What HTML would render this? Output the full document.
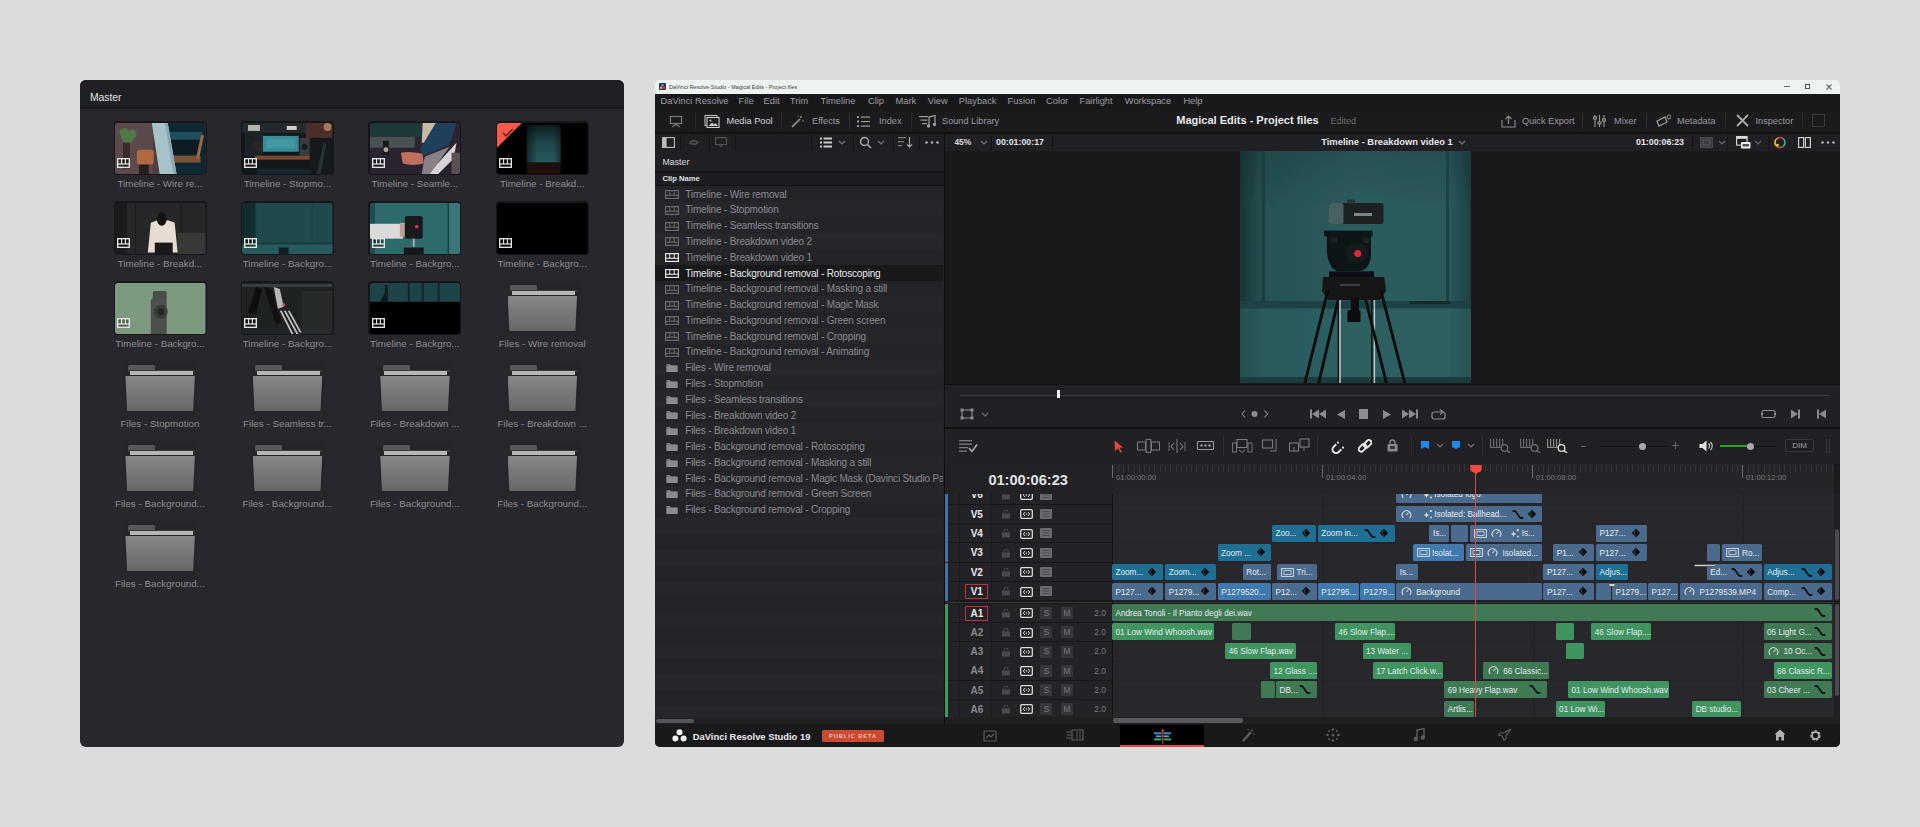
<!DOCTYPE html>
<html><head><meta charset="utf-8"><style>
*{box-sizing:border-box;margin:0;padding:0}
html,body{width:1920px;height:827px;overflow:hidden;background:#dcdcdc;font-family:"Liberation Sans",sans-serif;position:relative}
.a{position:absolute}
.t{white-space:nowrap;line-height:1.15}
</style></head><body>
<div class="a" style="left:80px;top:80px;width:544px;height:666.7px;background:#28272d;border-radius:6px;overflow:hidden">
<div class="a" style="left:0;top:0;width:544px;height:29px;background:#1f1f24;border-bottom:2px solid #18181c"></div>
<div class="a t" style="left:10px;top:12.3px;font-size:10.3px;color:#e6e6e6">Master</div>
</div>
<div class="a" style="left:113.5px;top:121.2px;width:93px;height:54px;border-radius:4px;background:#17171b"></div>
<svg class="a" style="left:115px;top:122.7px;border-radius:3px;filter:blur(0.5px)" width="90.5" height="51.5" viewBox="0 0 91 52" preserveAspectRatio="none"><rect width="91" height="52" fill="#4e3e40"/>
<rect x="0" y="0" width="38" height="52" fill="#5a4a4c"/>
<path d="M4 8 Q10 2 14 8 Q20 4 22 12 L16 20 L8 19Z" fill="#4f7a48"/>
<rect x="8" y="20" width="7" height="26" fill="#3a2c28"/>
<rect x="22" y="27" width="17" height="15" rx="3" fill="#b26a44"/>
<rect x="24" y="42" width="10" height="10" fill="#2a1e1a"/>
<rect x="52" y="0" width="39" height="52" fill="#0f2730"/>
<rect x="54" y="9" width="34" height="8" fill="#1f4e5e"/>
<rect x="53" y="17" width="32" height="14" fill="#0c1c22"/>
<rect x="58" y="33" width="28" height="7" fill="#7a5238"/>
<rect x="84" y="12" width="3" height="24" fill="#9a6a40" transform="rotate(12 85 24)"/>
<path d="M37 0 H53 L62 52 H45Z" fill="#a7c2c8"/>
<path d="M50 0 H53 L62 52 H59Z" fill="#8aa8b0"/></svg>
<svg class="a" style="left:117px;top:158.0px" width="13" height="10" viewBox="0 0 13 10"><rect x="0.7" y="0.7" width="11.6" height="8.6" fill="#000" fill-opacity="0.35" stroke="#eee" stroke-width="1.3"/><line x1="0.7" y1="6" x2="12.3" y2="6" stroke="#eee" stroke-width="1.2"/><line x1="4.6" y1="0.7" x2="4.6" y2="6" stroke="#eee" stroke-width="1.1"/><line x1="8.4" y1="0.7" x2="8.4" y2="6" stroke="#eee" stroke-width="1.1"/></svg>
<div class="a t" style="left:96px;width:128px;text-align:center;top:177.7px;font-size:9.8px;line-height:12px;color:#8d8d92">Timeline - Wire re...</div>
<div class="a" style="left:240.9px;top:121.2px;width:93px;height:54px;border-radius:4px;background:#17171b"></div>
<svg class="a" style="left:242.4px;top:122.7px;border-radius:3px;filter:blur(0.5px)" width="90.5" height="51.5" viewBox="0 0 91 52" preserveAspectRatio="none"><rect width="91" height="52" fill="#12171b"/>
<rect x="0" y="0" width="91" height="10" fill="#24292e"/>
<rect x="6" y="2" width="12" height="6" fill="#b8b4ae"/>
<rect x="45" y="3" width="10" height="4" fill="#d8d0c0"/>
<rect x="64" y="0" width="27" height="18" fill="#4a3028"/>
<circle cx="86" cy="4" r="4" fill="#a8785a"/>
<rect x="3" y="10" width="18" height="24" fill="#1b2228"/>
<circle cx="16" cy="23" r="5" fill="#2a2622"/>
<rect x="21" y="13" width="36" height="16" fill="#3a8c98"/>
<rect x="25" y="16" width="28" height="9" fill="#4aa0aa" opacity="0.6"/>
<rect x="58" y="15" width="11" height="18" fill="#3a3c40"/>
<circle cx="63" cy="24" r="3" fill="#16181a"/>
<rect x="13" y="33" width="58" height="4" fill="#7a4a30"/>
<rect x="68" y="15" width="23" height="37" fill="#15191c"/>
<path d="M75 52 L82 20 L85 21 L79 52Z" fill="#2a3034"/>
<rect x="15" y="46" width="55" height="6" fill="#13262e"/></svg>
<svg class="a" style="left:244.4px;top:158.0px" width="13" height="10" viewBox="0 0 13 10"><rect x="0.7" y="0.7" width="11.6" height="8.6" fill="#000" fill-opacity="0.35" stroke="#eee" stroke-width="1.3"/><line x1="0.7" y1="6" x2="12.3" y2="6" stroke="#eee" stroke-width="1.2"/><line x1="4.6" y1="0.7" x2="4.6" y2="6" stroke="#eee" stroke-width="1.1"/><line x1="8.4" y1="0.7" x2="8.4" y2="6" stroke="#eee" stroke-width="1.1"/></svg>
<div class="a t" style="left:223.4px;width:128px;text-align:center;top:177.7px;font-size:9.8px;line-height:12px;color:#8d8d92">Timeline - Stopmo...</div>
<div class="a" style="left:368.3px;top:121.2px;width:93px;height:54px;border-radius:4px;background:#17171b"></div>
<svg class="a" style="left:369.8px;top:122.7px;border-radius:3px;filter:blur(0.5px)" width="90.5" height="51.5" viewBox="0 0 91 52" preserveAspectRatio="none"><rect width="91" height="52" fill="#2a2430"/>
<rect x="0" y="0" width="55" height="14" fill="#1f383a"/>
<rect x="0" y="14" width="45" height="11" fill="#4b5153"/>
<rect x="13" y="18" width="6" height="14" fill="#1a1a1c"/>
<circle cx="16" cy="27" r="2.5" fill="#b0a8a0"/>
<path d="M31 30 Q40 28 53 31 L54 41 Q42 44 33 41Z" fill="#c06e5e"/>
<path d="M53 0 H68 L58 20 L52 20Z" fill="#c8b8a8"/>
<path d="M66 0 H87 L80 22 L55 33 L50 27Z" fill="#1f3f5a"/>
<path d="M58 52 L87 20 L84 36 L68 52Z" fill="#d8d4d8"/>
<path d="M55 34 L80 24 L60 52 L52 52Z" fill="#8a8088"/>
<rect x="82" y="30" width="9" height="22" fill="#5a5050"/></svg>
<svg class="a" style="left:371.8px;top:158.0px" width="13" height="10" viewBox="0 0 13 10"><rect x="0.7" y="0.7" width="11.6" height="8.6" fill="#000" fill-opacity="0.35" stroke="#eee" stroke-width="1.3"/><line x1="0.7" y1="6" x2="12.3" y2="6" stroke="#eee" stroke-width="1.2"/><line x1="4.6" y1="0.7" x2="4.6" y2="6" stroke="#eee" stroke-width="1.1"/><line x1="8.4" y1="0.7" x2="8.4" y2="6" stroke="#eee" stroke-width="1.1"/></svg>
<div class="a t" style="left:350.8px;width:128px;text-align:center;top:177.7px;font-size:9.8px;line-height:12px;color:#8d8d92">Timeline - Seamle...</div>
<div class="a" style="left:495.7px;top:121.2px;width:93px;height:54px;border-radius:4px;background:#17171b"></div>
<svg class="a" style="left:497.2px;top:122.7px;border-radius:3px;filter:blur(0.5px)" width="90.5" height="51.5" viewBox="0 0 91 52" preserveAspectRatio="none"><rect width="91" height="52" fill="#000"/>
<defs><linearGradient id="t4g" x1="0" x2="0" y1="0" y2="1"><stop offset="0" stop-color="#0c1d1f"/><stop offset="0.45" stop-color="#1d4649"/><stop offset="1" stop-color="#275a60"/></linearGradient><linearGradient id="t4h" x1="0" x2="1" y1="0" y2="0"><stop offset="0" stop-color="#000" stop-opacity="0.5"/><stop offset="0.3" stop-color="#000" stop-opacity="0"/><stop offset="0.8" stop-color="#000" stop-opacity="0"/><stop offset="1" stop-color="#000" stop-opacity="0.4"/></linearGradient></defs>
<rect x="30" y="2" width="34" height="38" fill="url(#t4g)"/>
<rect x="30" y="2" width="34" height="38" fill="url(#t4h)"/>
<rect x="30" y="40" width="34" height="11" fill="#1e0e0c"/>
<path d="M0 0 H25 L0 25Z" fill="#f65a48"/>
<path d="M6 10 L9 13 L16 6" fill="none" stroke="#6a1a14" stroke-width="1.5"/></svg>
<svg class="a" style="left:499.2px;top:158.0px" width="13" height="10" viewBox="0 0 13 10"><rect x="0.7" y="0.7" width="11.6" height="8.6" fill="#000" fill-opacity="0.35" stroke="#eee" stroke-width="1.3"/><line x1="0.7" y1="6" x2="12.3" y2="6" stroke="#eee" stroke-width="1.2"/><line x1="4.6" y1="0.7" x2="4.6" y2="6" stroke="#eee" stroke-width="1.1"/><line x1="8.4" y1="0.7" x2="8.4" y2="6" stroke="#eee" stroke-width="1.1"/></svg>
<div class="a t" style="left:478.2px;width:128px;text-align:center;top:177.7px;font-size:9.8px;line-height:12px;color:#8d8d92">Timeline - Breakd...</div>
<div class="a" style="left:113.5px;top:201.2px;width:93px;height:54px;border-radius:4px;background:#17171b"></div>
<svg class="a" style="left:115px;top:202.7px;border-radius:3px;filter:blur(0.5px)" width="90.5" height="51.5" viewBox="0 0 91 52" preserveAspectRatio="none"><rect width="91" height="52" fill="#262727"/>
<rect x="0" y="0" width="12" height="52" fill="#1a1b1b"/>
<rect x="20" y="0" width="1" height="52" fill="#1b1c1c"/>
<rect x="66" y="0" width="1" height="30" fill="#1b1c1c"/>
<rect x="63" y="30" width="28" height="22" fill="#383836"/>
<path d="M36 20 Q48 14 60 20 L63 50 H33Z" fill="#e6dcd2"/>
<ellipse cx="47" cy="16" rx="5" ry="7" fill="#15130f"/>
<rect x="40" y="40" width="18" height="12" fill="#1a1818"/></svg>
<svg class="a" style="left:117px;top:238.0px" width="13" height="10" viewBox="0 0 13 10"><rect x="0.7" y="0.7" width="11.6" height="8.6" fill="#000" fill-opacity="0.35" stroke="#eee" stroke-width="1.3"/><line x1="0.7" y1="6" x2="12.3" y2="6" stroke="#eee" stroke-width="1.2"/><line x1="4.6" y1="0.7" x2="4.6" y2="6" stroke="#eee" stroke-width="1.1"/><line x1="8.4" y1="0.7" x2="8.4" y2="6" stroke="#eee" stroke-width="1.1"/></svg>
<div class="a t" style="left:96px;width:128px;text-align:center;top:257.7px;font-size:9.8px;line-height:12px;color:#8d8d92">Timeline - Breakd...</div>
<div class="a" style="left:240.9px;top:201.2px;width:93px;height:54px;border-radius:4px;background:#17171b"></div>
<svg class="a" style="left:242.4px;top:202.7px;border-radius:3px;filter:blur(0.5px)" width="90.5" height="51.5" viewBox="0 0 91 52" preserveAspectRatio="none"><rect width="91" height="52" fill="#1f4a4c"/>
<rect x="0" y="0" width="13" height="52" fill="#102c2e"/>
<rect x="13" y="0" width="1.2" height="40" fill="#173a3c"/>
<rect x="70" y="0" width="1.2" height="40" fill="#1a4244"/>
<rect x="0" y="40" width="91" height="2" fill="#173b3d"/>
<rect x="0" y="42" width="91" height="10" fill="#265a5c"/>
<rect x="37" y="45" width="10" height="7" fill="#0f1e20"/></svg>
<svg class="a" style="left:244.4px;top:238.0px" width="13" height="10" viewBox="0 0 13 10"><rect x="0.7" y="0.7" width="11.6" height="8.6" fill="#000" fill-opacity="0.35" stroke="#eee" stroke-width="1.3"/><line x1="0.7" y1="6" x2="12.3" y2="6" stroke="#eee" stroke-width="1.2"/><line x1="4.6" y1="0.7" x2="4.6" y2="6" stroke="#eee" stroke-width="1.1"/><line x1="8.4" y1="0.7" x2="8.4" y2="6" stroke="#eee" stroke-width="1.1"/></svg>
<div class="a t" style="left:223.4px;width:128px;text-align:center;top:257.7px;font-size:9.8px;line-height:12px;color:#8d8d92">Timeline - Backgro...</div>
<div class="a" style="left:368.3px;top:201.2px;width:93px;height:54px;border-radius:4px;background:#17171b"></div>
<svg class="a" style="left:369.8px;top:202.7px;border-radius:3px;filter:blur(0.5px)" width="90.5" height="51.5" viewBox="0 0 91 52" preserveAspectRatio="none"><rect width="91" height="52" fill="#2f6a6b"/>
<rect x="0" y="0" width="5" height="52" fill="#1f4c4e"/>
<rect x="78" y="0" width="1.5" height="52" fill="#1a3e40"/>
<rect x="79.5" y="0" width="11.5" height="52" fill="#3a7678"/>
<rect x="0" y="21" width="33" height="15" fill="#dcdad8"/>
<rect x="30" y="20" width="8" height="14" fill="#c0a090"/>
<rect x="35" y="13" width="18" height="23" rx="2" fill="#171b1c"/>
<circle cx="47" cy="24" r="1.8" fill="#e03050"/>
<rect x="43" y="36" width="2" height="8" fill="#aab"/>
<rect x="34" y="45" width="20" height="7" fill="#141819"/></svg>
<svg class="a" style="left:371.8px;top:238.0px" width="13" height="10" viewBox="0 0 13 10"><rect x="0.7" y="0.7" width="11.6" height="8.6" fill="#000" fill-opacity="0.35" stroke="#eee" stroke-width="1.3"/><line x1="0.7" y1="6" x2="12.3" y2="6" stroke="#eee" stroke-width="1.2"/><line x1="4.6" y1="0.7" x2="4.6" y2="6" stroke="#eee" stroke-width="1.1"/><line x1="8.4" y1="0.7" x2="8.4" y2="6" stroke="#eee" stroke-width="1.1"/></svg>
<div class="a t" style="left:350.8px;width:128px;text-align:center;top:257.7px;font-size:9.8px;line-height:12px;color:#8d8d92">Timeline - Backgro...</div>
<div class="a" style="left:495.7px;top:201.2px;width:93px;height:54px;border-radius:4px;background:#17171b"></div>
<svg class="a" style="left:497.2px;top:202.7px;border-radius:3px;filter:blur(0.5px)" width="90.5" height="51.5" viewBox="0 0 91 52" preserveAspectRatio="none"><rect width="91" height="52" fill="#000"/></svg>
<svg class="a" style="left:499.2px;top:238.0px" width="13" height="10" viewBox="0 0 13 10"><rect x="0.7" y="0.7" width="11.6" height="8.6" fill="#000" fill-opacity="0.35" stroke="#eee" stroke-width="1.3"/><line x1="0.7" y1="6" x2="12.3" y2="6" stroke="#eee" stroke-width="1.2"/><line x1="4.6" y1="0.7" x2="4.6" y2="6" stroke="#eee" stroke-width="1.1"/><line x1="8.4" y1="0.7" x2="8.4" y2="6" stroke="#eee" stroke-width="1.1"/></svg>
<div class="a t" style="left:478.2px;width:128px;text-align:center;top:257.7px;font-size:9.8px;line-height:12px;color:#8d8d92">Timeline - Backgro...</div>
<div class="a" style="left:113.5px;top:281.2px;width:93px;height:54px;border-radius:4px;background:#17171b"></div>
<svg class="a" style="left:115px;top:282.7px;border-radius:3px;filter:blur(0.5px)" width="90.5" height="51.5" viewBox="0 0 91 52" preserveAspectRatio="none"><rect width="91" height="52" fill="#7e9a7e"/>
<rect x="38" y="8" width="14" height="10" rx="2" fill="#4a4d4a"/>
<rect x="36" y="16" width="16" height="36" rx="2" fill="#4c4f4c"/>
<circle cx="46" cy="29" r="7" fill="#3a3c3a"/>
<circle cx="46" cy="29" r="3.5" fill="#242624"/></svg>
<svg class="a" style="left:117px;top:318.0px" width="13" height="10" viewBox="0 0 13 10"><rect x="0.7" y="0.7" width="11.6" height="8.6" fill="#000" fill-opacity="0.35" stroke="#eee" stroke-width="1.3"/><line x1="0.7" y1="6" x2="12.3" y2="6" stroke="#eee" stroke-width="1.2"/><line x1="4.6" y1="0.7" x2="4.6" y2="6" stroke="#eee" stroke-width="1.1"/><line x1="8.4" y1="0.7" x2="8.4" y2="6" stroke="#eee" stroke-width="1.1"/></svg>
<div class="a t" style="left:96px;width:128px;text-align:center;top:337.7px;font-size:9.8px;line-height:12px;color:#8d8d92">Timeline - Backgro...</div>
<div class="a" style="left:240.9px;top:281.2px;width:93px;height:54px;border-radius:4px;background:#17171b"></div>
<svg class="a" style="left:242.4px;top:282.7px;border-radius:3px;filter:blur(0.5px)" width="90.5" height="51.5" viewBox="0 0 91 52" preserveAspectRatio="none"><rect width="91" height="52" fill="#1e2322"/>
<rect x="0" y="1" width="91" height="3" fill="#3a3f3e"/>
<rect x="60" y="8" width="31" height="44" fill="#262b2a"/>
<path d="M6 30 L14 4 L20 6 L14 32Z" fill="#0c0e0e"/>
<path d="M22 4 L30 6 L40 40 L34 42Z" fill="#101212"/>
<path d="M32 4 L38 6 L42 24 L36 26Z" fill="#b8b8b8"/>
<circle cx="42" cy="22" r="1.5" fill="#e04060"/>
<path d="M38 28 L50 52 L52 52 L40 28Z M42 28 L55 52 L57 52 L44 28Z M46 28 L58 50 L60 50 L48 28Z" fill="#c0c0c0"/></svg>
<svg class="a" style="left:244.4px;top:318.0px" width="13" height="10" viewBox="0 0 13 10"><rect x="0.7" y="0.7" width="11.6" height="8.6" fill="#000" fill-opacity="0.35" stroke="#eee" stroke-width="1.3"/><line x1="0.7" y1="6" x2="12.3" y2="6" stroke="#eee" stroke-width="1.2"/><line x1="4.6" y1="0.7" x2="4.6" y2="6" stroke="#eee" stroke-width="1.1"/><line x1="8.4" y1="0.7" x2="8.4" y2="6" stroke="#eee" stroke-width="1.1"/></svg>
<div class="a t" style="left:223.4px;width:128px;text-align:center;top:337.7px;font-size:9.8px;line-height:12px;color:#8d8d92">Timeline - Backgro...</div>
<div class="a" style="left:368.3px;top:281.2px;width:93px;height:54px;border-radius:4px;background:#17171b"></div>
<svg class="a" style="left:369.8px;top:282.7px;border-radius:3px;filter:blur(0.5px)" width="90.5" height="51.5" viewBox="0 0 91 52" preserveAspectRatio="none"><rect width="91" height="52" fill="#000"/>
<rect x="0" y="0" width="91" height="19" fill="#1d4446"/>
<rect x="15" y="2" width="3" height="17" fill="#0e2224"/>
<rect x="38" y="0" width="2" height="19" fill="#102628"/>
<rect x="52" y="0" width="2" height="19" fill="#102628"/>
<rect x="68" y="0" width="2" height="19" fill="#102628"/>
<path d="M10 19 L16 8 L18 19Z" fill="#0b1a1c"/></svg>
<svg class="a" style="left:371.8px;top:318.0px" width="13" height="10" viewBox="0 0 13 10"><rect x="0.7" y="0.7" width="11.6" height="8.6" fill="#000" fill-opacity="0.35" stroke="#eee" stroke-width="1.3"/><line x1="0.7" y1="6" x2="12.3" y2="6" stroke="#eee" stroke-width="1.2"/><line x1="4.6" y1="0.7" x2="4.6" y2="6" stroke="#eee" stroke-width="1.1"/><line x1="8.4" y1="0.7" x2="8.4" y2="6" stroke="#eee" stroke-width="1.1"/></svg>
<div class="a t" style="left:350.8px;width:128px;text-align:center;top:337.7px;font-size:9.8px;line-height:12px;color:#8d8d92">Timeline - Backgro...</div>
<div class="a" style="left:507.59999999999997px;top:284.0px;width:71px;height:49px;background:#222226;filter:blur(2px);opacity:0.6"></div>
<div class="a" style="left:509.9px;top:285.0px;width:27.3px;height:5px;background:#58585c;border-radius:1.5px 1.5px 0 0"></div>
<div class="a" style="left:509.9px;top:289.5px;width:67px;height:2px;background:#3a3a3e"></div>
<div class="a" style="left:511.7px;top:291.3px;width:63px;height:3.7px;background:#b6b6b8"></div>
<div class="a" style="left:507.59999999999997px;top:295.6px;width:69.5px;height:35.4px;background:linear-gradient(#868688,#68686b);clip-path:polygon(0 0,100% 0,97.4% 100%,2.6% 100%)"></div>
<div class="a t" style="left:478.2px;width:128px;text-align:center;top:337.7px;font-size:9.8px;line-height:12px;color:#8d8d92">Files - Wire removal</div>
<div class="a" style="left:125.4px;top:364.0px;width:71px;height:49px;background:#222226;filter:blur(2px);opacity:0.6"></div>
<div class="a" style="left:127.7px;top:365.0px;width:27.3px;height:5px;background:#58585c;border-radius:1.5px 1.5px 0 0"></div>
<div class="a" style="left:127.7px;top:369.5px;width:67px;height:2px;background:#3a3a3e"></div>
<div class="a" style="left:129.5px;top:371.3px;width:63px;height:3.7px;background:#b6b6b8"></div>
<div class="a" style="left:125.4px;top:375.6px;width:69.5px;height:35.4px;background:linear-gradient(#868688,#68686b);clip-path:polygon(0 0,100% 0,97.4% 100%,2.6% 100%)"></div>
<div class="a t" style="left:96px;width:128px;text-align:center;top:417.7px;font-size:9.8px;line-height:12px;color:#8d8d92">Files - Stopmotion</div>
<div class="a" style="left:252.8px;top:364.0px;width:71px;height:49px;background:#222226;filter:blur(2px);opacity:0.6"></div>
<div class="a" style="left:255.10000000000002px;top:365.0px;width:27.3px;height:5px;background:#58585c;border-radius:1.5px 1.5px 0 0"></div>
<div class="a" style="left:255.10000000000002px;top:369.5px;width:67px;height:2px;background:#3a3a3e"></div>
<div class="a" style="left:256.90000000000003px;top:371.3px;width:63px;height:3.7px;background:#b6b6b8"></div>
<div class="a" style="left:252.8px;top:375.6px;width:69.5px;height:35.4px;background:linear-gradient(#868688,#68686b);clip-path:polygon(0 0,100% 0,97.4% 100%,2.6% 100%)"></div>
<div class="a t" style="left:223.4px;width:128px;text-align:center;top:417.7px;font-size:9.8px;line-height:12px;color:#8d8d92">Files - Seamless tr...</div>
<div class="a" style="left:380.2px;top:364.0px;width:71px;height:49px;background:#222226;filter:blur(2px);opacity:0.6"></div>
<div class="a" style="left:382.5px;top:365.0px;width:27.3px;height:5px;background:#58585c;border-radius:1.5px 1.5px 0 0"></div>
<div class="a" style="left:382.5px;top:369.5px;width:67px;height:2px;background:#3a3a3e"></div>
<div class="a" style="left:384.3px;top:371.3px;width:63px;height:3.7px;background:#b6b6b8"></div>
<div class="a" style="left:380.2px;top:375.6px;width:69.5px;height:35.4px;background:linear-gradient(#868688,#68686b);clip-path:polygon(0 0,100% 0,97.4% 100%,2.6% 100%)"></div>
<div class="a t" style="left:350.8px;width:128px;text-align:center;top:417.7px;font-size:9.8px;line-height:12px;color:#8d8d92">Files - Breakdown ...</div>
<div class="a" style="left:507.59999999999997px;top:364.0px;width:71px;height:49px;background:#222226;filter:blur(2px);opacity:0.6"></div>
<div class="a" style="left:509.9px;top:365.0px;width:27.3px;height:5px;background:#58585c;border-radius:1.5px 1.5px 0 0"></div>
<div class="a" style="left:509.9px;top:369.5px;width:67px;height:2px;background:#3a3a3e"></div>
<div class="a" style="left:511.7px;top:371.3px;width:63px;height:3.7px;background:#b6b6b8"></div>
<div class="a" style="left:507.59999999999997px;top:375.6px;width:69.5px;height:35.4px;background:linear-gradient(#868688,#68686b);clip-path:polygon(0 0,100% 0,97.4% 100%,2.6% 100%)"></div>
<div class="a t" style="left:478.2px;width:128px;text-align:center;top:417.7px;font-size:9.8px;line-height:12px;color:#8d8d92">Files - Breakdown ...</div>
<div class="a" style="left:125.4px;top:444.0px;width:71px;height:49px;background:#222226;filter:blur(2px);opacity:0.6"></div>
<div class="a" style="left:127.7px;top:445.0px;width:27.3px;height:5px;background:#58585c;border-radius:1.5px 1.5px 0 0"></div>
<div class="a" style="left:127.7px;top:449.5px;width:67px;height:2px;background:#3a3a3e"></div>
<div class="a" style="left:129.5px;top:451.3px;width:63px;height:3.7px;background:#b6b6b8"></div>
<div class="a" style="left:125.4px;top:455.6px;width:69.5px;height:35.4px;background:linear-gradient(#868688,#68686b);clip-path:polygon(0 0,100% 0,97.4% 100%,2.6% 100%)"></div>
<div class="a t" style="left:96px;width:128px;text-align:center;top:497.7px;font-size:9.8px;line-height:12px;color:#8d8d92">Files - Background...</div>
<div class="a" style="left:252.8px;top:444.0px;width:71px;height:49px;background:#222226;filter:blur(2px);opacity:0.6"></div>
<div class="a" style="left:255.10000000000002px;top:445.0px;width:27.3px;height:5px;background:#58585c;border-radius:1.5px 1.5px 0 0"></div>
<div class="a" style="left:255.10000000000002px;top:449.5px;width:67px;height:2px;background:#3a3a3e"></div>
<div class="a" style="left:256.90000000000003px;top:451.3px;width:63px;height:3.7px;background:#b6b6b8"></div>
<div class="a" style="left:252.8px;top:455.6px;width:69.5px;height:35.4px;background:linear-gradient(#868688,#68686b);clip-path:polygon(0 0,100% 0,97.4% 100%,2.6% 100%)"></div>
<div class="a t" style="left:223.4px;width:128px;text-align:center;top:497.7px;font-size:9.8px;line-height:12px;color:#8d8d92">Files - Background...</div>
<div class="a" style="left:380.2px;top:444.0px;width:71px;height:49px;background:#222226;filter:blur(2px);opacity:0.6"></div>
<div class="a" style="left:382.5px;top:445.0px;width:27.3px;height:5px;background:#58585c;border-radius:1.5px 1.5px 0 0"></div>
<div class="a" style="left:382.5px;top:449.5px;width:67px;height:2px;background:#3a3a3e"></div>
<div class="a" style="left:384.3px;top:451.3px;width:63px;height:3.7px;background:#b6b6b8"></div>
<div class="a" style="left:380.2px;top:455.6px;width:69.5px;height:35.4px;background:linear-gradient(#868688,#68686b);clip-path:polygon(0 0,100% 0,97.4% 100%,2.6% 100%)"></div>
<div class="a t" style="left:350.8px;width:128px;text-align:center;top:497.7px;font-size:9.8px;line-height:12px;color:#8d8d92">Files - Background...</div>
<div class="a" style="left:507.59999999999997px;top:444.0px;width:71px;height:49px;background:#222226;filter:blur(2px);opacity:0.6"></div>
<div class="a" style="left:509.9px;top:445.0px;width:27.3px;height:5px;background:#58585c;border-radius:1.5px 1.5px 0 0"></div>
<div class="a" style="left:509.9px;top:449.5px;width:67px;height:2px;background:#3a3a3e"></div>
<div class="a" style="left:511.7px;top:451.3px;width:63px;height:3.7px;background:#b6b6b8"></div>
<div class="a" style="left:507.59999999999997px;top:455.6px;width:69.5px;height:35.4px;background:linear-gradient(#868688,#68686b);clip-path:polygon(0 0,100% 0,97.4% 100%,2.6% 100%)"></div>
<div class="a t" style="left:478.2px;width:128px;text-align:center;top:497.7px;font-size:9.8px;line-height:12px;color:#8d8d92">Files - Background...</div>
<div class="a" style="left:125.4px;top:524.0px;width:71px;height:49px;background:#222226;filter:blur(2px);opacity:0.6"></div>
<div class="a" style="left:127.7px;top:525.0px;width:27.3px;height:5px;background:#58585c;border-radius:1.5px 1.5px 0 0"></div>
<div class="a" style="left:127.7px;top:529.5px;width:67px;height:2px;background:#3a3a3e"></div>
<div class="a" style="left:129.5px;top:531.3px;width:63px;height:3.7px;background:#b6b6b8"></div>
<div class="a" style="left:125.4px;top:535.6px;width:69.5px;height:35.4px;background:linear-gradient(#868688,#68686b);clip-path:polygon(0 0,100% 0,97.4% 100%,2.6% 100%)"></div>
<div class="a t" style="left:96px;width:128px;text-align:center;top:577.7px;font-size:9.8px;line-height:12px;color:#8d8d92">Files - Background...</div>
<div class="a" style="left:655px;top:90px;width:1185px;height:657px;background:#1b1b1e;border-radius:0 0 5px 5px;overflow:hidden"></div>
<div class="a" style="left:655px;top:80px;width:1185px;height:14px;background:#eef3f2;border-radius:5px 5px 0 0"></div>
<svg class="a" style="left:659px;top:83.3px;" width="7" height="7" viewBox="0 0 7 7"><rect x="0" y="0" width="7" height="7" rx="1.3" fill="#233048"/><circle cx="3.5" cy="2.3" r="1.3" fill="#3aa0e0"/><circle cx="2" cy="4.8" r="1.3" fill="#e0b030"/><circle cx="5" cy="4.8" r="1.3" fill="#d04070"/></svg>
<div class="a t" style="left:669px;top:83.6px;font-size:5.5px;line-height:6.3px;color:#3c3e40;font-weight:normal;">DaVinci Resolve Studio - Magical Edits - Project files</div>
<div class="a" style="left:1783.5px;top:86px;width:6.5px;height:0.9px;background:#666;"></div>
<div class="a" style="left:1804.6px;top:84.2px;width:5.4px;height:4.8px;border:0.9px solid #555"></div>
<svg class="a" style="left:1826.2px;top:83.8px;" width="6" height="6" viewBox="0 0 6 6"><path d="M0.5 0.5L5.5 5.5M5.5 0.5L0.5 5.5" stroke="#666" stroke-width="1.1"/></svg>
<div class="a" style="left:655px;top:94px;width:1185px;height:16px;background:#18181b;"></div>
<div class="a t" style="left:660.5px;top:96.1px;font-size:9.3px;line-height:10.7px;color:#9d9da2;font-weight:normal;">DaVinci Resolve</div>
<div class="a t" style="left:738.6px;top:96.1px;font-size:9.3px;line-height:10.7px;color:#9d9da2;font-weight:normal;">File</div>
<div class="a t" style="left:763.6px;top:96.1px;font-size:9.3px;line-height:10.7px;color:#9d9da2;font-weight:normal;">Edit</div>
<div class="a t" style="left:790px;top:96.1px;font-size:9.3px;line-height:10.7px;color:#9d9da2;font-weight:normal;">Trim</div>
<div class="a t" style="left:820.6px;top:96.1px;font-size:9.3px;line-height:10.7px;color:#9d9da2;font-weight:normal;">Timeline</div>
<div class="a t" style="left:868px;top:96.1px;font-size:9.3px;line-height:10.7px;color:#9d9da2;font-weight:normal;">Clip</div>
<div class="a t" style="left:895.6px;top:96.1px;font-size:9.3px;line-height:10.7px;color:#9d9da2;font-weight:normal;">Mark</div>
<div class="a t" style="left:927.7px;top:96.1px;font-size:9.3px;line-height:10.7px;color:#9d9da2;font-weight:normal;">View</div>
<div class="a t" style="left:958.8px;top:96.1px;font-size:9.3px;line-height:10.7px;color:#9d9da2;font-weight:normal;">Playback</div>
<div class="a t" style="left:1007.5px;top:96.1px;font-size:9.3px;line-height:10.7px;color:#9d9da2;font-weight:normal;">Fusion</div>
<div class="a t" style="left:1046px;top:96.1px;font-size:9.3px;line-height:10.7px;color:#9d9da2;font-weight:normal;">Color</div>
<div class="a t" style="left:1079.5px;top:96.1px;font-size:9.3px;line-height:10.7px;color:#9d9da2;font-weight:normal;">Fairlight</div>
<div class="a t" style="left:1124.8px;top:96.1px;font-size:9.3px;line-height:10.7px;color:#9d9da2;font-weight:normal;">Workspace</div>
<div class="a t" style="left:1183.4px;top:96.1px;font-size:9.3px;line-height:10.7px;color:#9d9da2;font-weight:normal;">Help</div>
<div class="a" style="left:655px;top:110px;width:1185px;height:22px;background:#1b1b1e;"></div>
<div class="a" style="left:655px;top:132px;width:1185px;height:2px;background:#111113;"></div>
<div class="a" style="left:695px;top:113px;width:1px;height:16px;background:#2a2a2e;"></div>
<div class="a" style="left:781px;top:113px;width:1px;height:16px;background:#2a2a2e;"></div>
<div class="a" style="left:849px;top:113px;width:1px;height:16px;background:#2a2a2e;"></div>
<div class="a" style="left:911px;top:113px;width:1px;height:16px;background:#2a2a2e;"></div>
<div class="a" style="left:1582px;top:113px;width:1px;height:16px;background:#2a2a2e;"></div>
<div class="a" style="left:1646px;top:113px;width:1px;height:16px;background:#2a2a2e;"></div>
<div class="a" style="left:1725px;top:113px;width:1px;height:16px;background:#2a2a2e;"></div>
<div class="a" style="left:1802px;top:113px;width:1px;height:16px;background:#2a2a2e;"></div>
<svg class="a" style="left:669px;top:115px;" width="14" height="13" viewBox="0 0 14 13"><rect x="1.5" y="1.5" width="11" height="7" fill="none" stroke="#777" stroke-width="1.2"/><path d="M3.5 12 L7 9 L10.5 12" fill="none" stroke="#777" stroke-width="1.2"/></svg>
<svg class="a" style="left:704px;top:114px;" width="16" height="14" viewBox="0 0 16 14"><rect x="1" y="1.5" width="12" height="10" fill="none" stroke="#bbb" stroke-width="1.1"/><rect x="3" y="3.5" width="12" height="10" fill="#1b1b1e" stroke="#ccc" stroke-width="1.1"/><path d="M4.5 12 L8 8.5 L10 10.5 L11.5 9 L14 12Z" fill="#ccc"/><circle cx="6.5" cy="6.5" r="1" fill="#ccc"/></svg>
<div class="a t" style="left:726.6px;top:115.7px;font-size:9.2px;line-height:10.6px;color:#d8d8dc;font-weight:normal;">Media Pool</div>
<svg class="a" style="left:790px;top:114px;" width="15" height="15" viewBox="0 0 15 15"><path d="M2 13 L10 5" stroke="#888" stroke-width="1.8"/><circle cx="11" cy="3" r="1" fill="#888"/><circle cx="13" cy="7" r="0.8" fill="#888"/><circle cx="8" cy="2" r="0.7" fill="#888"/></svg>
<div class="a t" style="left:812px;top:115.7px;font-size:9.2px;line-height:10.6px;color:#9a9a9e;font-weight:normal;">Effects</div>
<svg class="a" style="left:857px;top:115px;" width="14" height="13" viewBox="0 0 14 13"><g fill="#999"><rect x="0" y="1" width="2" height="2"/><rect x="0" y="5.5" width="2" height="2"/><rect x="0" y="10" width="2" height="2"/><rect x="4" y="1.5" width="9" height="1.2"/><rect x="4" y="6" width="9" height="1.2"/><rect x="4" y="10.5" width="9" height="1.2"/></g></svg>
<div class="a t" style="left:879px;top:115.7px;font-size:9.2px;line-height:10.6px;color:#9a9a9e;font-weight:normal;">Index</div>
<svg class="a" style="left:919px;top:114px;" width="17" height="15" viewBox="0 0 17 15"><g fill="#999"><rect x="0" y="2" width="9" height="1.2"/><rect x="1.5" y="5.5" width="7" height="1.2"/><rect x="3" y="9" width="5" height="1.2"/></g><path d="M10 12 V3 L16 1.5 V10" fill="none" stroke="#999" stroke-width="1.3"/><circle cx="9.5" cy="12" r="1.7" fill="#999"/><circle cx="15.5" cy="10.5" r="1.7" fill="#999"/></svg>
<div class="a t" style="left:942px;top:115.7px;font-size:9.2px;line-height:10.6px;color:#9a9a9e;font-weight:normal;">Sound Library</div>
<div class="a t" style="left:1047.5px;width:400px;text-align:center;top:114.1px;font-size:11px;line-height:12.6px;color:#e8e8ea;font-weight:bold;">Magical Edits - Project files</div>
<div class="a t" style="left:1330.5px;top:115.8px;font-size:9px;line-height:10.3px;color:#6a6a6e;font-weight:normal;">Edited</div>
<svg class="a" style="left:1501px;top:114px;" width="15" height="14" viewBox="0 0 15 14"><path d="M1 6 V13 H14 V6" fill="none" stroke="#8a8a8e" stroke-width="1.1"/><path d="M7.5 10 V2 M4.5 5 L7.5 2 L10.5 5" fill="none" stroke="#8a8a8e" stroke-width="1.2"/></svg>
<div class="a t" style="left:1522px;top:115.7px;font-size:9.2px;line-height:10.6px;color:#9a9a9e;font-weight:normal;">Quick Export</div>
<svg class="a" style="left:1593px;top:114px;" width="13" height="14" viewBox="0 0 13 14"><g stroke="#999" stroke-width="1.1" fill="none"><line x1="2" y1="1" x2="2" y2="13"/><line x1="6.5" y1="1" x2="6.5" y2="13"/><line x1="11" y1="1" x2="11" y2="13"/></g><g fill="#1b1b1e" stroke="#999" stroke-width="1"><rect x="0.5" y="3" width="3" height="2"/><rect x="5" y="8" width="3" height="2"/><rect x="9.5" y="5" width="3" height="2"/></g></svg>
<div class="a t" style="left:1614px;top:115.7px;font-size:9.2px;line-height:10.6px;color:#9a9a9e;font-weight:normal;">Mixer</div>
<svg class="a" style="left:1656px;top:114px;" width="15" height="13" viewBox="0 0 15 13"><path d="M1 7 L9 3 L11 8 L3 12Z" fill="none" stroke="#999" stroke-width="1.3"/><circle cx="13" cy="3" r="2" fill="none" stroke="#999" stroke-width="1"/></svg>
<div class="a t" style="left:1677px;top:115.7px;font-size:9.2px;line-height:10.6px;color:#9a9a9e;font-weight:normal;">Metadata</div>
<svg class="a" style="left:1735px;top:114px;" width="15" height="14" viewBox="0 0 15 14"><path d="M2 1 L13 12 M13 1 L2 12" stroke="#aaa" stroke-width="1.8"/></svg>
<div class="a t" style="left:1755.5px;top:115.7px;font-size:9.2px;line-height:10.6px;color:#9a9a9e;font-weight:normal;">Inspector</div>
<div class="a" style="left:1812px;top:114px;width:13px;height:13px;border:1px solid #3a3a3e"></div>
<div class="a" style="left:655px;top:134px;width:289px;height:17px;background:#1f1f23;"></div>
<div class="a" style="left:945px;top:134px;width:895px;height:17px;background:#202024;"></div>
<div class="a" style="left:944px;top:134px;width:1px;height:590px;background:#0e0e10;"></div>
<div class="a" style="left:680px;top:135px;width:1px;height:15px;background:#141416;"></div>
<div class="a" style="left:709px;top:135px;width:1px;height:15px;background:#141416;"></div>
<div class="a" style="left:735px;top:135px;width:1px;height:15px;background:#141416;"></div>
<div class="a" style="left:811px;top:135px;width:1px;height:15px;background:#141416;"></div>
<div class="a" style="left:853px;top:135px;width:1px;height:15px;background:#141416;"></div>
<div class="a" style="left:893px;top:135px;width:1px;height:15px;background:#141416;"></div>
<div class="a" style="left:919px;top:135px;width:1px;height:15px;background:#141416;"></div>
<div class="a" style="left:1052px;top:135px;width:1px;height:15px;background:#141416;"></div>
<div class="a" style="left:1692px;top:135px;width:1px;height:15px;background:#141416;"></div>
<div class="a" style="left:1768px;top:135px;width:1px;height:15px;background:#141416;"></div>
<div class="a" style="left:1794px;top:135px;width:1px;height:15px;background:#141416;"></div>
<svg class="a" style="left:662px;top:137px;" width="13" height="11" viewBox="0 0 13 11"><rect x="0.6" y="0.6" width="11.8" height="9.8" fill="none" stroke="#bbb" stroke-width="1.1"/><rect x="0.6" y="0.6" width="4" height="9.8" fill="#bbb"/></svg>
<svg class="a" style="left:688px;top:137px;" width="12" height="11" viewBox="0 0 12 11"><path d="M2 7 a3 3 0 0 1 3-3 h4 M10 4 a3 3 0 0 1-3 3 h-4" fill="none" stroke="#555" stroke-width="1.3"/></svg>
<svg class="a" style="left:715px;top:137px;" width="12" height="11" viewBox="0 0 12 11"><rect x="0.6" y="0.6" width="10.8" height="7" fill="none" stroke="#555" stroke-width="1.1"/><path d="M4 7.5 L6 10 L8 7.5" fill="none" stroke="#555"/></svg>
<svg class="a" style="left:820px;top:137px;" width="12" height="11" viewBox="0 0 12 11"><g fill="#ccc"><rect x="0" y="0.5" width="2" height="2"/><rect x="0" y="4.5" width="2" height="2"/><rect x="0" y="8.5" width="2" height="2"/><rect x="3.5" y="0.5" width="8.5" height="2"/><rect x="3.5" y="4.5" width="8.5" height="2"/><rect x="3.5" y="8.5" width="8.5" height="2"/></g></svg>
<svg class="a" style="left:838px;top:140px;" width="8" height="5" viewBox="0 0 8 5"><path d="M1 1 L4 4 L7 1" fill="none" stroke="#777" stroke-width="1.1"/></svg>
<svg class="a" style="left:859px;top:136px;" width="13" height="13" viewBox="0 0 13 13"><circle cx="5.5" cy="5.5" r="4" fill="none" stroke="#aaa" stroke-width="1.4"/><path d="M8.5 8.5 L12 12" stroke="#aaa" stroke-width="1.6"/></svg>
<svg class="a" style="left:877px;top:140px;" width="8" height="5" viewBox="0 0 8 5"><path d="M1 1 L4 4 L7 1" fill="none" stroke="#777" stroke-width="1.1"/></svg>
<svg class="a" style="left:898px;top:136px;" width="15" height="13" viewBox="0 0 15 13"><g fill="#777"><rect x="0" y="1" width="8" height="1.3"/><rect x="0" y="5" width="6" height="1.3"/><rect x="0" y="9" width="4" height="1.3"/></g><path d="M11.5 1 V11 M9 8.5 L11.5 11 L14 8.5" fill="none" stroke="#aaa" stroke-width="1.2"/></svg>
<svg class="a" style="left:925px;top:141px;" width="14" height="3" viewBox="0 0 14 3"><circle cx="1.5" cy="1.5" r="1.3" fill="#aaa"/><circle cx="7" cy="1.5" r="1.3" fill="#aaa"/><circle cx="12.5" cy="1.5" r="1.3" fill="#aaa"/></svg>
<div class="a t" style="left:954.4px;top:137.6px;font-size:8.5px;line-height:9.8px;color:#d8d8dc;font-weight:bold;">45%</div>
<svg class="a" style="left:980px;top:140px;" width="8" height="5" viewBox="0 0 8 5"><path d="M1 1 L4 4 L7 1" fill="none" stroke="#777" stroke-width="1.1"/></svg>
<div class="a" style="left:991px;top:135px;width:1px;height:15px;background:#141416;"></div>
<div class="a t" style="left:996px;top:137.4px;font-size:8.8px;line-height:10.1px;color:#e0e0e4;font-weight:bold;">00:01:00:17</div>
<div class="a t" style="left:1187px;width:400px;text-align:center;top:136.8px;font-size:9.4px;line-height:10.8px;color:#e6e6ea;font-weight:bold;">Timeline - Breakdown video 1</div>
<svg class="a" style="left:1458px;top:140px;" width="8" height="5" viewBox="0 0 8 5"><path d="M1 1 L4 4 L7 1" fill="none" stroke="#777" stroke-width="1.1"/></svg>
<div class="a t" style="left:1384px;width:300px;text-align:right;top:137.4px;font-size:8.8px;line-height:10.1px;color:#e6e6ea;font-weight:bold;">01:00:06:23</div>
<svg class="a" style="left:1699.5px;top:136.5px;" width="13" height="11" viewBox="0 0 13 11"><rect x="0.5" y="0.5" width="12" height="10" fill="#3e3e42" stroke="#4a4a4e"/><rect x="3" y="3" width="7" height="5" fill="none" stroke="#5a5a5e" stroke-width="0.9"/></svg>
<div class="a" style="left:1727px;top:135px;width:1px;height:15px;background:#141416;"></div>
<svg class="a" style="left:1718px;top:140px;" width="8" height="5" viewBox="0 0 8 5"><path d="M1 1 L4 4 L7 1" fill="none" stroke="#666" stroke-width="1.1"/></svg>
<svg class="a" style="left:1736px;top:136px;" width="15" height="13" viewBox="0 0 15 13"><rect x="0.6" y="0.6" width="10.5" height="8.5" fill="none" stroke="#ddd" stroke-width="1.1"/><rect x="0.6" y="0.6" width="10.5" height="2.2" fill="#ddd"/><rect x="5" y="6" width="9.5" height="6.5" rx="1" fill="#eee"/><rect x="6.5" y="8" width="6.5" height="2.5" fill="#555"/></svg>
<svg class="a" style="left:1754px;top:140px;" width="8" height="5" viewBox="0 0 8 5"><path d="M1 1 L4 4 L7 1" fill="none" stroke="#666" stroke-width="1.1"/></svg>
<svg class="a" style="left:1773px;top:136px;" width="14" height="13" viewBox="0 0 14 13"><circle cx="7" cy="6.5" r="5" fill="none" stroke="url(#rg)" stroke-width="1.6"/><defs><linearGradient id="rg"><stop offset="0" stop-color="#e4d21a"/><stop offset=".5" stop-color="#e0306a"/><stop offset="1" stop-color="#30c090"/></linearGradient></defs><circle cx="4.5" cy="9" r="1.3" fill="#e8d820"/></svg>
<svg class="a" style="left:1798px;top:137px;" width="13" height="11" viewBox="0 0 13 11"><rect x="0.6" y="0.6" width="5" height="9.8" fill="none" stroke="#ccc" stroke-width="1.2"/><rect x="7.4" y="0.6" width="5" height="9.8" fill="none" stroke="#ccc" stroke-width="1.2"/></svg>
<svg class="a" style="left:1821px;top:141px;" width="14" height="3" viewBox="0 0 14 3"><circle cx="1.5" cy="1.5" r="1.3" fill="#aaa"/><circle cx="7" cy="1.5" r="1.3" fill="#aaa"/><circle cx="12.5" cy="1.5" r="1.3" fill="#aaa"/></svg>
<div class="a" style="left:655px;top:151px;width:289px;height:573px;background:#252529;"></div>
<div class="a" style="left:655px;top:151px;width:289px;height:20px;background:#202024;"></div>
<div class="a t" style="left:662.5px;top:157.4px;font-size:8.8px;line-height:10.1px;color:#dcdcdf;font-weight:normal;">Master</div>
<div class="a" style="left:655px;top:171px;width:289px;height:2px;background:#141417;"></div>
<div class="a" style="left:655px;top:173px;width:289px;height:12px;background:#1d1d21;"></div>
<div class="a t" style="left:662.5px;top:174.6px;font-size:7.6px;line-height:8.7px;color:#e0e0e4;font-weight:bold;">Clip Name</div>
<div class="a" style="left:655px;top:185px;width:289px;height:1px;background:#141417;"></div>
<div class="a" style="left:655px;top:186px;width:288px;height:532px;overflow:hidden">
<div class="a" style="left:0;top:0.00px;width:288px;height:15.88px;background:#242428"></div>
<div class="a" style="left:0;top:15.78px;width:288px;height:15.88px;background:#27272b"></div>
<div class="a" style="left:0;top:31.56px;width:288px;height:15.88px;background:#242428"></div>
<div class="a" style="left:0;top:47.34px;width:288px;height:15.88px;background:#27272b"></div>
<div class="a" style="left:0;top:63.12px;width:288px;height:15.88px;background:#242428"></div>
<div class="a" style="left:0;top:78.90px;width:288px;height:15.88px;background:#19191c"></div>
<div class="a" style="left:0;top:94.68px;width:288px;height:15.88px;background:#242428"></div>
<div class="a" style="left:0;top:110.46px;width:288px;height:15.88px;background:#27272b"></div>
<div class="a" style="left:0;top:126.24px;width:288px;height:15.88px;background:#242428"></div>
<div class="a" style="left:0;top:142.02px;width:288px;height:15.88px;background:#27272b"></div>
<div class="a" style="left:0;top:157.80px;width:288px;height:15.88px;background:#242428"></div>
<div class="a" style="left:0;top:173.58px;width:288px;height:15.88px;background:#27272b"></div>
<div class="a" style="left:0;top:189.36px;width:288px;height:15.88px;background:#242428"></div>
<div class="a" style="left:0;top:205.14px;width:288px;height:15.88px;background:#27272b"></div>
<div class="a" style="left:0;top:220.92px;width:288px;height:15.88px;background:#242428"></div>
<div class="a" style="left:0;top:236.70px;width:288px;height:15.88px;background:#27272b"></div>
<div class="a" style="left:0;top:252.48px;width:288px;height:15.88px;background:#242428"></div>
<div class="a" style="left:0;top:268.26px;width:288px;height:15.88px;background:#27272b"></div>
<div class="a" style="left:0;top:284.04px;width:288px;height:15.88px;background:#242428"></div>
<div class="a" style="left:0;top:299.82px;width:288px;height:15.88px;background:#27272b"></div>
<div class="a" style="left:0;top:315.60px;width:288px;height:15.88px;background:#242428"></div>
<div class="a" style="left:0;top:331.38px;width:288px;height:15.88px;background:#27272b"></div>
<div class="a" style="left:0;top:347.16px;width:288px;height:15.88px;background:#242428"></div>
<div class="a" style="left:0;top:362.94px;width:288px;height:15.88px;background:#27272b"></div>
<div class="a" style="left:0;top:378.72px;width:288px;height:15.88px;background:#242428"></div>
<div class="a" style="left:0;top:394.50px;width:288px;height:15.88px;background:#27272b"></div>
<div class="a" style="left:0;top:410.28px;width:288px;height:15.88px;background:#242428"></div>
<div class="a" style="left:0;top:426.06px;width:288px;height:15.88px;background:#27272b"></div>
<div class="a" style="left:0;top:441.84px;width:288px;height:15.88px;background:#242428"></div>
<div class="a" style="left:0;top:457.62px;width:288px;height:15.88px;background:#27272b"></div>
<div class="a" style="left:0;top:473.40px;width:288px;height:15.88px;background:#242428"></div>
<div class="a" style="left:0;top:489.18px;width:288px;height:15.88px;background:#27272b"></div>
<div class="a" style="left:0;top:504.96px;width:288px;height:15.88px;background:#242428"></div>
<div class="a" style="left:0;top:520.74px;width:288px;height:15.88px;background:#27272b"></div>
<svg class="a" style="left:10px;top:4.0px" width="14" height="9" viewBox="0 0 14 9"><rect x="0.6" y="0.6" width="12.8" height="7.8" fill="none" stroke="#6a6a6e" stroke-width="1.2"/><line x1="0.6" y1="5.3" x2="13.4" y2="5.3" stroke="#6a6a6e" stroke-width="1.1"/><line x1="4.8" y1="0.6" x2="4.8" y2="5.3" stroke="#6a6a6e" stroke-width="1"/><line x1="9.2" y1="0.6" x2="9.2" y2="5.3" stroke="#6a6a6e" stroke-width="1"/></svg>
<div class="a t" style="left:30.3px;top:2.6px;font-size:10px;letter-spacing:-0.17px;line-height:12px;color:#8a8a8f">Timeline - Wire removal</div>
<svg class="a" style="left:10px;top:19.8px" width="14" height="9" viewBox="0 0 14 9"><rect x="0.6" y="0.6" width="12.8" height="7.8" fill="none" stroke="#6a6a6e" stroke-width="1.2"/><line x1="0.6" y1="5.3" x2="13.4" y2="5.3" stroke="#6a6a6e" stroke-width="1.1"/><line x1="4.8" y1="0.6" x2="4.8" y2="5.3" stroke="#6a6a6e" stroke-width="1"/><line x1="9.2" y1="0.6" x2="9.2" y2="5.3" stroke="#6a6a6e" stroke-width="1"/></svg>
<div class="a t" style="left:30.3px;top:18.4px;font-size:10px;letter-spacing:-0.17px;line-height:12px;color:#8a8a8f">Timeline - Stopmotion</div>
<svg class="a" style="left:10px;top:35.6px" width="14" height="9" viewBox="0 0 14 9"><rect x="0.6" y="0.6" width="12.8" height="7.8" fill="none" stroke="#6a6a6e" stroke-width="1.2"/><line x1="0.6" y1="5.3" x2="13.4" y2="5.3" stroke="#6a6a6e" stroke-width="1.1"/><line x1="4.8" y1="0.6" x2="4.8" y2="5.3" stroke="#6a6a6e" stroke-width="1"/><line x1="9.2" y1="0.6" x2="9.2" y2="5.3" stroke="#6a6a6e" stroke-width="1"/></svg>
<div class="a t" style="left:30.3px;top:34.2px;font-size:10px;letter-spacing:-0.17px;line-height:12px;color:#8a8a8f">Timeline - Seamless transitions</div>
<svg class="a" style="left:10px;top:51.3px" width="14" height="9" viewBox="0 0 14 9"><rect x="0.6" y="0.6" width="12.8" height="7.8" fill="none" stroke="#6a6a6e" stroke-width="1.2"/><line x1="0.6" y1="5.3" x2="13.4" y2="5.3" stroke="#6a6a6e" stroke-width="1.1"/><line x1="4.8" y1="0.6" x2="4.8" y2="5.3" stroke="#6a6a6e" stroke-width="1"/><line x1="9.2" y1="0.6" x2="9.2" y2="5.3" stroke="#6a6a6e" stroke-width="1"/></svg>
<div class="a t" style="left:30.3px;top:49.9px;font-size:10px;letter-spacing:-0.17px;line-height:12px;color:#8a8a8f">Timeline - Breakdown video 2</div>
<svg class="a" style="left:10px;top:67.1px" width="14" height="9" viewBox="0 0 14 9"><rect x="0.6" y="0.6" width="12.8" height="7.8" fill="none" stroke="#e6e6e6" stroke-width="1.2"/><line x1="0.6" y1="5.3" x2="13.4" y2="5.3" stroke="#e6e6e6" stroke-width="1.1"/><line x1="4.8" y1="0.6" x2="4.8" y2="5.3" stroke="#e6e6e6" stroke-width="1"/><line x1="9.2" y1="0.6" x2="9.2" y2="5.3" stroke="#e6e6e6" stroke-width="1"/></svg>
<div class="a t" style="left:30.3px;top:65.7px;font-size:10px;letter-spacing:-0.17px;line-height:12px;color:#8a8a8f">Timeline - Breakdown video 1</div>
<svg class="a" style="left:10px;top:82.9px" width="14" height="9" viewBox="0 0 14 9"><rect x="0.6" y="0.6" width="12.8" height="7.8" fill="none" stroke="#e6e6e6" stroke-width="1.2"/><line x1="0.6" y1="5.3" x2="13.4" y2="5.3" stroke="#e6e6e6" stroke-width="1.1"/><line x1="4.8" y1="0.6" x2="4.8" y2="5.3" stroke="#e6e6e6" stroke-width="1"/><line x1="9.2" y1="0.6" x2="9.2" y2="5.3" stroke="#e6e6e6" stroke-width="1"/></svg>
<div class="a t" style="left:30.3px;top:81.5px;font-size:10px;letter-spacing:-0.17px;line-height:12px;color:#e8e8ec">Timeline - Background removal - Rotoscoping</div>
<svg class="a" style="left:10px;top:98.7px" width="14" height="9" viewBox="0 0 14 9"><rect x="0.6" y="0.6" width="12.8" height="7.8" fill="none" stroke="#6a6a6e" stroke-width="1.2"/><line x1="0.6" y1="5.3" x2="13.4" y2="5.3" stroke="#6a6a6e" stroke-width="1.1"/><line x1="4.8" y1="0.6" x2="4.8" y2="5.3" stroke="#6a6a6e" stroke-width="1"/><line x1="9.2" y1="0.6" x2="9.2" y2="5.3" stroke="#6a6a6e" stroke-width="1"/></svg>
<div class="a t" style="left:30.3px;top:97.3px;font-size:10px;letter-spacing:-0.17px;line-height:12px;color:#8a8a8f">Timeline - Background removal - Masking a still</div>
<svg class="a" style="left:10px;top:114.5px" width="14" height="9" viewBox="0 0 14 9"><rect x="0.6" y="0.6" width="12.8" height="7.8" fill="none" stroke="#6a6a6e" stroke-width="1.2"/><line x1="0.6" y1="5.3" x2="13.4" y2="5.3" stroke="#6a6a6e" stroke-width="1.1"/><line x1="4.8" y1="0.6" x2="4.8" y2="5.3" stroke="#6a6a6e" stroke-width="1"/><line x1="9.2" y1="0.6" x2="9.2" y2="5.3" stroke="#6a6a6e" stroke-width="1"/></svg>
<div class="a t" style="left:30.3px;top:113.1px;font-size:10px;letter-spacing:-0.17px;line-height:12px;color:#8a8a8f">Timeline - Background removal - Magic Mask</div>
<svg class="a" style="left:10px;top:130.2px" width="14" height="9" viewBox="0 0 14 9"><rect x="0.6" y="0.6" width="12.8" height="7.8" fill="none" stroke="#6a6a6e" stroke-width="1.2"/><line x1="0.6" y1="5.3" x2="13.4" y2="5.3" stroke="#6a6a6e" stroke-width="1.1"/><line x1="4.8" y1="0.6" x2="4.8" y2="5.3" stroke="#6a6a6e" stroke-width="1"/><line x1="9.2" y1="0.6" x2="9.2" y2="5.3" stroke="#6a6a6e" stroke-width="1"/></svg>
<div class="a t" style="left:30.3px;top:128.8px;font-size:10px;letter-spacing:-0.17px;line-height:12px;color:#8a8a8f">Timeline - Background removal - Green screen</div>
<svg class="a" style="left:10px;top:146.0px" width="14" height="9" viewBox="0 0 14 9"><rect x="0.6" y="0.6" width="12.8" height="7.8" fill="none" stroke="#6a6a6e" stroke-width="1.2"/><line x1="0.6" y1="5.3" x2="13.4" y2="5.3" stroke="#6a6a6e" stroke-width="1.1"/><line x1="4.8" y1="0.6" x2="4.8" y2="5.3" stroke="#6a6a6e" stroke-width="1"/><line x1="9.2" y1="0.6" x2="9.2" y2="5.3" stroke="#6a6a6e" stroke-width="1"/></svg>
<div class="a t" style="left:30.3px;top:144.6px;font-size:10px;letter-spacing:-0.17px;line-height:12px;color:#8a8a8f">Timeline - Background removal - Cropping</div>
<svg class="a" style="left:10px;top:161.8px" width="14" height="9" viewBox="0 0 14 9"><rect x="0.6" y="0.6" width="12.8" height="7.8" fill="none" stroke="#6a6a6e" stroke-width="1.2"/><line x1="0.6" y1="5.3" x2="13.4" y2="5.3" stroke="#6a6a6e" stroke-width="1.1"/><line x1="4.8" y1="0.6" x2="4.8" y2="5.3" stroke="#6a6a6e" stroke-width="1"/><line x1="9.2" y1="0.6" x2="9.2" y2="5.3" stroke="#6a6a6e" stroke-width="1"/></svg>
<div class="a t" style="left:30.3px;top:160.4px;font-size:10px;letter-spacing:-0.17px;line-height:12px;color:#8a8a8f">Timeline - Background removal - Animating</div>
<svg class="a" style="left:11px;top:177.1px" width="12" height="10" viewBox="0 0 12 10"><path d="M0.5 1 H4 L5 2.2 H11.5 V9 H0.5Z" fill="#7a7a7e"/><rect x="0.5" y="3" width="11" height="6" fill="#8c8c90"/></svg>
<div class="a t" style="left:30.3px;top:176.2px;font-size:10px;letter-spacing:-0.17px;line-height:12px;color:#8a8a8f">Files - Wire removal</div>
<svg class="a" style="left:11px;top:192.9px" width="12" height="10" viewBox="0 0 12 10"><path d="M0.5 1 H4 L5 2.2 H11.5 V9 H0.5Z" fill="#7a7a7e"/><rect x="0.5" y="3" width="11" height="6" fill="#8c8c90"/></svg>
<div class="a t" style="left:30.3px;top:192.0px;font-size:10px;letter-spacing:-0.17px;line-height:12px;color:#8a8a8f">Files - Stopmotion</div>
<svg class="a" style="left:11px;top:208.6px" width="12" height="10" viewBox="0 0 12 10"><path d="M0.5 1 H4 L5 2.2 H11.5 V9 H0.5Z" fill="#7a7a7e"/><rect x="0.5" y="3" width="11" height="6" fill="#8c8c90"/></svg>
<div class="a t" style="left:30.3px;top:207.7px;font-size:10px;letter-spacing:-0.17px;line-height:12px;color:#8a8a8f">Files - Seamless transitions</div>
<svg class="a" style="left:11px;top:224.4px" width="12" height="10" viewBox="0 0 12 10"><path d="M0.5 1 H4 L5 2.2 H11.5 V9 H0.5Z" fill="#7a7a7e"/><rect x="0.5" y="3" width="11" height="6" fill="#8c8c90"/></svg>
<div class="a t" style="left:30.3px;top:223.5px;font-size:10px;letter-spacing:-0.17px;line-height:12px;color:#8a8a8f">Files - Breakdown video 2</div>
<svg class="a" style="left:11px;top:240.2px" width="12" height="10" viewBox="0 0 12 10"><path d="M0.5 1 H4 L5 2.2 H11.5 V9 H0.5Z" fill="#7a7a7e"/><rect x="0.5" y="3" width="11" height="6" fill="#8c8c90"/></svg>
<div class="a t" style="left:30.3px;top:239.3px;font-size:10px;letter-spacing:-0.17px;line-height:12px;color:#8a8a8f">Files - Breakdown video 1</div>
<svg class="a" style="left:11px;top:256.0px" width="12" height="10" viewBox="0 0 12 10"><path d="M0.5 1 H4 L5 2.2 H11.5 V9 H0.5Z" fill="#7a7a7e"/><rect x="0.5" y="3" width="11" height="6" fill="#8c8c90"/></svg>
<div class="a t" style="left:30.3px;top:255.1px;font-size:10px;letter-spacing:-0.17px;line-height:12px;color:#8a8a8f">Files - Background removal - Rotoscoping</div>
<svg class="a" style="left:11px;top:271.8px" width="12" height="10" viewBox="0 0 12 10"><path d="M0.5 1 H4 L5 2.2 H11.5 V9 H0.5Z" fill="#7a7a7e"/><rect x="0.5" y="3" width="11" height="6" fill="#8c8c90"/></svg>
<div class="a t" style="left:30.3px;top:270.9px;font-size:10px;letter-spacing:-0.17px;line-height:12px;color:#8a8a8f">Files - Background removal - Masking a still</div>
<svg class="a" style="left:11px;top:287.5px" width="12" height="10" viewBox="0 0 12 10"><path d="M0.5 1 H4 L5 2.2 H11.5 V9 H0.5Z" fill="#7a7a7e"/><rect x="0.5" y="3" width="11" height="6" fill="#8c8c90"/></svg>
<div class="a t" style="left:30.3px;top:286.6px;font-size:10px;letter-spacing:-0.17px;line-height:12px;color:#8a8a8f">Files - Background removal - Magic Mask (Davinci Studio Paid)</div>
<svg class="a" style="left:11px;top:303.3px" width="12" height="10" viewBox="0 0 12 10"><path d="M0.5 1 H4 L5 2.2 H11.5 V9 H0.5Z" fill="#7a7a7e"/><rect x="0.5" y="3" width="11" height="6" fill="#8c8c90"/></svg>
<div class="a t" style="left:30.3px;top:302.4px;font-size:10px;letter-spacing:-0.17px;line-height:12px;color:#8a8a8f">Files - Background removal - Green Screen</div>
<svg class="a" style="left:11px;top:319.1px" width="12" height="10" viewBox="0 0 12 10"><path d="M0.5 1 H4 L5 2.2 H11.5 V9 H0.5Z" fill="#7a7a7e"/><rect x="0.5" y="3" width="11" height="6" fill="#8c8c90"/></svg>
<div class="a t" style="left:30.3px;top:318.2px;font-size:10px;letter-spacing:-0.17px;line-height:12px;color:#8a8a8f">Files - Background removal - Cropping</div>
</div>
<div class="a" style="left:655px;top:718px;width:289px;height:6px;background:#1f1f23;"></div>
<div class="a" style="left:656px;top:718.5px;width:38px;height:4px;background:#55555b;border-radius:2px"></div>
<div class="a" style="left:945px;top:151px;width:895px;height:233px;background:#19191b;"></div>
<svg class="a" style="left:1240px;top:151px;" width="231" height="232" viewBox="0 0 231 232"><defs>
<linearGradient id="vbg" x1="0" x2="1" y1="0" y2="0"><stop offset="0" stop-color="#1a3638"/><stop offset="0.1" stop-color="#255152"/><stop offset="0.5" stop-color="#2c5d5e"/><stop offset="0.9" stop-color="#2a5a5c"/><stop offset="1" stop-color="#1f4042"/></linearGradient>
<linearGradient id="vbg2" x1="0" x2="0" y1="0" y2="1"><stop offset="0" stop-color="#000" stop-opacity="0.12"/><stop offset="0.25" stop-color="#000" stop-opacity="0"/><stop offset="1" stop-color="#000" stop-opacity="0"/></linearGradient>
<filter id="vb" x="-5%" y="-5%" width="110%" height="110%"><feGaussianBlur stdDeviation="0.55"/></filter>
</defs>
<g filter="url(#vb)">
<rect x="0" y="0" width="231" height="232" fill="url(#vbg)"/>
<rect x="0" y="157" width="231" height="75" fill="#2f6264" opacity="0.55"/>
<rect x="0" y="0" width="231" height="232" fill="url(#vbg2)"/>
<rect x="22" y="0" width="3" height="150" fill="#1d3e40"/>
<rect x="206" y="0" width="3" height="150" fill="#1f4244"/>
<rect x="2" y="0" width="2" height="150" fill="#1a3436"/>
<rect x="0" y="150" width="231" height="7.5" fill="#1f4345"/>
<rect x="170" y="150" width="40" height="3" fill="#16292b"/>
<rect x="0" y="226" width="231" height="6" fill="#1f3a3c"/>
<rect x="89" y="52" width="54.5" height="21" rx="2.5" fill="#1a2224"/>
<rect x="89" y="52" width="14.5" height="21" rx="2.5" fill="#4a5e60"/>
<rect x="107" y="48.5" width="8" height="4" fill="#2a3436"/>
<rect x="114" y="62" width="18" height="3" fill="#7a8688"/>
<rect x="84" y="79.6" width="48.6" height="5.8" fill="#101416"/>
<path d="M86.8 85 H131 V106 Q129 120 117 120.3 H97 Q88 116 86.8 100Z" fill="#111517"/>
<circle cx="94" cy="89" r="3.2" fill="#1c2224"/>
<circle cx="126" cy="89" r="3.2" fill="#1c2224"/>
<circle cx="117" cy="102" r="10.5" fill="#171c1e"/>
<circle cx="117.7" cy="102.6" r="3.5" fill="#e0283c"/>
<circle cx="94" cy="114.5" r="3" fill="#0c0f10"/>
<rect x="89" y="120.3" width="45" height="5.7" fill="#0e1112"/>
<path d="M83 126 H144.2 L146 140 L140 149.3 H88 L82 140Z" fill="#141819"/>
<rect x="100" y="133" width="20" height="2" fill="#3a4244"/>
<path d="M86.4 139 L63.4 232 H66.4 L89.4 139Z" fill="#0b0e0f"/>
<path d="M96.7 149 L77.2 232 H80.2 L99.7 149Z" fill="#0b0e0f"/>
<rect x="97.6" y="149" width="1.6" height="83" fill="#0f1314"/>
<rect x="99.3" y="149" width="1.4" height="83" fill="#c8d0d2"/>
<rect x="131" y="149" width="1.6" height="83" fill="#0f1314"/>
<rect x="133.7" y="149" width="1.4" height="83" fill="#c0c8ca"/>
<path d="M124.3 149 L144.9 232 H147.9 L127.3 149Z" fill="#0b0e0f"/>
<path d="M139.2 139 L163.3 232 H166.3 L142.2 139Z" fill="#0b0e0f"/>
<rect x="110.8" y="146" width="8.1" height="14" fill="#0d1011"/>
<rect x="107.4" y="159" width="13.2" height="12" rx="1.5" fill="#0d1011"/>
</g></svg>
<div class="a" style="left:945px;top:384px;width:895px;height:1px;background:#0f0f11;"></div>
<div class="a" style="left:945px;top:385px;width:895px;height:42px;background:#212125;"></div>
<div class="a" style="left:960px;top:394.5px;width:870px;height:1px;background:#3a3a3e;"></div>
<div class="a" style="left:1057px;top:390px;width:2.5px;height:8px;background:#f0f0f0;"></div>
<div class="a" style="left:945px;top:427px;width:895px;height:2px;background:#131315;"></div>
<div class="a" style="left:945px;top:429px;width:895px;height:35px;background:#212125;"></div>
<div class="a" style="left:945px;top:463.5px;width:895px;height:1px;background:#151517;"></div>
<div class="a" style="left:945px;top:464px;width:167px;height:253px;background:#222226;"></div>
<div class="a" style="left:1112px;top:464px;width:722px;height:253px;background:#28282c;"></div>
<div class="a" style="left:945px;top:717px;width:895px;height:7px;background:#1f1f22;"></div>
<div class="a" style="left:1112.8px;top:718px;width:130.5px;height:4.7px;background:#58585d;border-radius:2px"></div>
<div class="a" style="left:655px;top:724px;width:1185px;height:23px;background:#19191b;border-radius:0 0 5px 5px"></div>
<svg class="a" style="left:672px;top:729px;" width="15" height="13" viewBox="0 0 15 13"><circle cx="7.5" cy="3.3" r="3" fill="#f2f2f2"/><circle cx="3.4" cy="9.5" r="3" fill="#f2f2f2"/><circle cx="11.6" cy="9.5" r="3" fill="#f2f2f2"/></svg>
<div class="a t" style="left:692.8px;top:731.5px;font-size:9.4px;line-height:10.8px;color:#ececee;font-weight:bold;">DaVinci Resolve Studio 19</div>
<div class="a" style="left:822.3px;top:730.4px;width:61.6px;height:12px;background:#c94a30;border-radius:1.5px"></div>
<div class="a t" style="left:653px;width:400px;text-align:center;top:733.2px;font-size:5.6px;line-height:6.4px;color:#f0c0b4;font-weight:bold;letter-spacing:1px">PUBLIC BETA</div>
<div class="a" style="left:1120px;top:725px;width:84px;height:22px;background:#000;"></div>
<div class="a" style="left:1120px;top:745.3px;width:84px;height:1.7px;background:#ea4a3a;"></div>
<div class="a" style="left:1112px;top:464.5px;width:722px;height:29px;background:#252529;"></div>
<svg class="a" style="left:1112px;top:464.5px;" width="722" height="15" viewBox="0 0 722 15"><rect x="0" y="0" width="1" height="13" fill="#6a6a70"/><rect x="6" y="0" width="1" height="7.5" fill="#34343a"/><rect x="11" y="0" width="1" height="7.5" fill="#34343a"/><rect x="16" y="0" width="1" height="7.5" fill="#34343a"/><rect x="22" y="0" width="1" height="7.5" fill="#34343a"/><rect x="27" y="0" width="1" height="7.5" fill="#34343a"/><rect x="32" y="0" width="1" height="7.5" fill="#34343a"/><rect x="37" y="0" width="1" height="7.5" fill="#34343a"/><rect x="42" y="0" width="1" height="7.5" fill="#34343a"/><rect x="48" y="0" width="1" height="7.5" fill="#34343a"/><rect x="53" y="0" width="1" height="7.5" fill="#34343a"/><rect x="58" y="0" width="1" height="7.5" fill="#34343a"/><rect x="64" y="0" width="1" height="7.5" fill="#34343a"/><rect x="69" y="0" width="1" height="7.5" fill="#34343a"/><rect x="74" y="0" width="1" height="7.5" fill="#34343a"/><rect x="79" y="0" width="1" height="7.5" fill="#34343a"/><rect x="84" y="0" width="1" height="7.5" fill="#34343a"/><rect x="90" y="0" width="1" height="7.5" fill="#34343a"/><rect x="95" y="0" width="1" height="7.5" fill="#34343a"/><rect x="100" y="0" width="1" height="7.5" fill="#34343a"/><rect x="106" y="0" width="1" height="7.5" fill="#34343a"/><rect x="111" y="0" width="1" height="7.5" fill="#34343a"/><rect x="116" y="0" width="1" height="7.5" fill="#34343a"/><rect x="121" y="0" width="1" height="7.5" fill="#34343a"/><rect x="126" y="0" width="1" height="7.5" fill="#34343a"/><rect x="132" y="0" width="1" height="7.5" fill="#34343a"/><rect x="137" y="0" width="1" height="7.5" fill="#34343a"/><rect x="142" y="0" width="1" height="7.5" fill="#34343a"/><rect x="148" y="0" width="1" height="7.5" fill="#34343a"/><rect x="153" y="0" width="1" height="7.5" fill="#34343a"/><rect x="158" y="0" width="1" height="7.5" fill="#34343a"/><rect x="163" y="0" width="1" height="7.5" fill="#34343a"/><rect x="168" y="0" width="1" height="7.5" fill="#34343a"/><rect x="174" y="0" width="1" height="7.5" fill="#34343a"/><rect x="179" y="0" width="1" height="7.5" fill="#34343a"/><rect x="184" y="0" width="1" height="7.5" fill="#34343a"/><rect x="190" y="0" width="1" height="7.5" fill="#34343a"/><rect x="195" y="0" width="1" height="7.5" fill="#34343a"/><rect x="200" y="0" width="1" height="7.5" fill="#34343a"/><rect x="205" y="0" width="1" height="7.5" fill="#34343a"/><rect x="210" y="0" width="1" height="13" fill="#6a6a70"/><rect x="216" y="0" width="1" height="7.5" fill="#34343a"/><rect x="221" y="0" width="1" height="7.5" fill="#34343a"/><rect x="226" y="0" width="1" height="7.5" fill="#34343a"/><rect x="232" y="0" width="1" height="7.5" fill="#34343a"/><rect x="237" y="0" width="1" height="7.5" fill="#34343a"/><rect x="242" y="0" width="1" height="7.5" fill="#34343a"/><rect x="247" y="0" width="1" height="7.5" fill="#34343a"/><rect x="252" y="0" width="1" height="7.5" fill="#34343a"/><rect x="258" y="0" width="1" height="7.5" fill="#34343a"/><rect x="263" y="0" width="1" height="7.5" fill="#34343a"/><rect x="268" y="0" width="1" height="7.5" fill="#34343a"/><rect x="274" y="0" width="1" height="7.5" fill="#34343a"/><rect x="279" y="0" width="1" height="7.5" fill="#34343a"/><rect x="284" y="0" width="1" height="7.5" fill="#34343a"/><rect x="289" y="0" width="1" height="7.5" fill="#34343a"/><rect x="294" y="0" width="1" height="7.5" fill="#34343a"/><rect x="300" y="0" width="1" height="7.5" fill="#34343a"/><rect x="305" y="0" width="1" height="7.5" fill="#34343a"/><rect x="310" y="0" width="1" height="7.5" fill="#34343a"/><rect x="316" y="0" width="1" height="7.5" fill="#34343a"/><rect x="321" y="0" width="1" height="7.5" fill="#34343a"/><rect x="326" y="0" width="1" height="7.5" fill="#34343a"/><rect x="331" y="0" width="1" height="7.5" fill="#34343a"/><rect x="336" y="0" width="1" height="7.5" fill="#34343a"/><rect x="342" y="0" width="1" height="7.5" fill="#34343a"/><rect x="347" y="0" width="1" height="7.5" fill="#34343a"/><rect x="352" y="0" width="1" height="7.5" fill="#34343a"/><rect x="358" y="0" width="1" height="7.5" fill="#34343a"/><rect x="363" y="0" width="1" height="7.5" fill="#34343a"/><rect x="368" y="0" width="1" height="7.5" fill="#34343a"/><rect x="373" y="0" width="1" height="7.5" fill="#34343a"/><rect x="378" y="0" width="1" height="7.5" fill="#34343a"/><rect x="384" y="0" width="1" height="7.5" fill="#34343a"/><rect x="389" y="0" width="1" height="7.5" fill="#34343a"/><rect x="394" y="0" width="1" height="7.5" fill="#34343a"/><rect x="400" y="0" width="1" height="7.5" fill="#34343a"/><rect x="405" y="0" width="1" height="7.5" fill="#34343a"/><rect x="410" y="0" width="1" height="7.5" fill="#34343a"/><rect x="415" y="0" width="1" height="7.5" fill="#34343a"/><rect x="420" y="0" width="1" height="13" fill="#6a6a70"/><rect x="426" y="0" width="1" height="7.5" fill="#34343a"/><rect x="431" y="0" width="1" height="7.5" fill="#34343a"/><rect x="436" y="0" width="1" height="7.5" fill="#34343a"/><rect x="442" y="0" width="1" height="7.5" fill="#34343a"/><rect x="447" y="0" width="1" height="7.5" fill="#34343a"/><rect x="452" y="0" width="1" height="7.5" fill="#34343a"/><rect x="457" y="0" width="1" height="7.5" fill="#34343a"/><rect x="462" y="0" width="1" height="7.5" fill="#34343a"/><rect x="468" y="0" width="1" height="7.5" fill="#34343a"/><rect x="473" y="0" width="1" height="7.5" fill="#34343a"/><rect x="478" y="0" width="1" height="7.5" fill="#34343a"/><rect x="484" y="0" width="1" height="7.5" fill="#34343a"/><rect x="489" y="0" width="1" height="7.5" fill="#34343a"/><rect x="494" y="0" width="1" height="7.5" fill="#34343a"/><rect x="499" y="0" width="1" height="7.5" fill="#34343a"/><rect x="504" y="0" width="1" height="7.5" fill="#34343a"/><rect x="510" y="0" width="1" height="7.5" fill="#34343a"/><rect x="515" y="0" width="1" height="7.5" fill="#34343a"/><rect x="520" y="0" width="1" height="7.5" fill="#34343a"/><rect x="526" y="0" width="1" height="7.5" fill="#34343a"/><rect x="531" y="0" width="1" height="7.5" fill="#34343a"/><rect x="536" y="0" width="1" height="7.5" fill="#34343a"/><rect x="541" y="0" width="1" height="7.5" fill="#34343a"/><rect x="546" y="0" width="1" height="7.5" fill="#34343a"/><rect x="552" y="0" width="1" height="7.5" fill="#34343a"/><rect x="557" y="0" width="1" height="7.5" fill="#34343a"/><rect x="562" y="0" width="1" height="7.5" fill="#34343a"/><rect x="568" y="0" width="1" height="7.5" fill="#34343a"/><rect x="573" y="0" width="1" height="7.5" fill="#34343a"/><rect x="578" y="0" width="1" height="7.5" fill="#34343a"/><rect x="583" y="0" width="1" height="7.5" fill="#34343a"/><rect x="588" y="0" width="1" height="7.5" fill="#34343a"/><rect x="594" y="0" width="1" height="7.5" fill="#34343a"/><rect x="599" y="0" width="1" height="7.5" fill="#34343a"/><rect x="604" y="0" width="1" height="7.5" fill="#34343a"/><rect x="610" y="0" width="1" height="7.5" fill="#34343a"/><rect x="615" y="0" width="1" height="7.5" fill="#34343a"/><rect x="620" y="0" width="1" height="7.5" fill="#34343a"/><rect x="625" y="0" width="1" height="7.5" fill="#34343a"/><rect x="630" y="0" width="1" height="13" fill="#6a6a70"/><rect x="636" y="0" width="1" height="7.5" fill="#34343a"/><rect x="641" y="0" width="1" height="7.5" fill="#34343a"/><rect x="646" y="0" width="1" height="7.5" fill="#34343a"/><rect x="652" y="0" width="1" height="7.5" fill="#34343a"/><rect x="657" y="0" width="1" height="7.5" fill="#34343a"/><rect x="662" y="0" width="1" height="7.5" fill="#34343a"/><rect x="667" y="0" width="1" height="7.5" fill="#34343a"/><rect x="672" y="0" width="1" height="7.5" fill="#34343a"/><rect x="678" y="0" width="1" height="7.5" fill="#34343a"/><rect x="683" y="0" width="1" height="7.5" fill="#34343a"/><rect x="688" y="0" width="1" height="7.5" fill="#34343a"/><rect x="694" y="0" width="1" height="7.5" fill="#34343a"/><rect x="699" y="0" width="1" height="7.5" fill="#34343a"/><rect x="704" y="0" width="1" height="7.5" fill="#34343a"/><rect x="709" y="0" width="1" height="7.5" fill="#34343a"/><rect x="714" y="0" width="1" height="7.5" fill="#34343a"/><rect x="720" y="0" width="1" height="7.5" fill="#34343a"/></svg>
<div class="a t" style="left:1116px;top:474.4px;font-size:7.6px;line-height:8.7px;color:#7a7a7f;font-weight:normal;">01:00:00:00</div>
<div class="a t" style="left:1326px;top:474.4px;font-size:7.6px;line-height:8.7px;color:#7a7a7f;font-weight:normal;">01:00:04:00</div>
<div class="a t" style="left:1536px;top:474.4px;font-size:7.6px;line-height:8.7px;color:#7a7a7f;font-weight:normal;">01:00:08:00</div>
<div class="a t" style="left:1746px;top:474.4px;font-size:7.6px;line-height:8.7px;color:#7a7a7f;font-weight:normal;">01:00:12:00</div>
<div class="a" style="left:1322.5px;top:493px;width:1px;height:224px;background:#222226;"></div>
<div class="a" style="left:1532.5px;top:493px;width:1px;height:224px;background:#222226;"></div>
<div class="a" style="left:1742.5px;top:493px;width:1px;height:224px;background:#222226;"></div>
<div class="a" style="left:945px;top:464.5px;width:167px;height:29px;background:#222226;"></div>
<div class="a t" style="left:988.4px;top:471.5px;font-size:14.6px;line-height:16.8px;color:#e2e2e6;font-weight:bold;">01:00:06:23</div>
<div class="a" style="left:945px;top:493.5px;width:889px;height:223.5px;overflow:hidden">
<div class="a" style="left:0.00px;top:-8.30px;width:167.00px;height:19.30px;background:#232327;"></div>
<div class="a" style="left:0.00px;top:10.20px;width:167.00px;height:0.80px;background:#18181b;"></div>
<div class="a" style="left:167.00px;top:10.20px;width:722.00px;height:0.80px;background:#252529;"></div>
<div class="a" style="left:0.30px;top:-8.30px;width:2.80px;height:19.30px;background:#3f72a6;"></div>
<div class="a" style="left:14.00px;top:-8.30px;width:0.80px;height:19.30px;background:#1a1a1d;"></div>
<div class="a" style="left:46.00px;top:-8.30px;width:0.80px;height:19.30px;background:#1a1a1d;"></div>
<div class="a t" style="left:-18.20px;width:100px;text-align:center;top:-4.15px;font-size:10px;line-height:11.5px;color:#e8e8ec;font-weight:bold;">V6</div>
<svg class="a" style="left:56.00px;top:-2.80px" width="10" height="9" viewBox="0 0 10 9"><rect x="1" y="3.5" width="8" height="5" fill="#4a4a4e"/><path d="M3 3.5 V2 a2 2 0 0 1 4 0 V3.5" fill="none" stroke="#4a4a4e" stroke-width="1"/></svg>
<svg class="a" style="left:74.50px;top:-3.60px" width="13" height="10" viewBox="0 0 13 10"><rect x="0.7" y="0.7" width="11.6" height="8.6" rx="1" fill="none" stroke="#dcdcdc" stroke-width="1.3"/><path d="M5 3 L3.3 5 L5 7 M8 3 L9.7 5 L8 7" fill="none" stroke="#dcdcdc" stroke-width="1"/><circle cx="6.5" cy="5" r="0.8" fill="#dcdcdc"/></svg>
<svg class="a" style="left:95.00px;top:-3.80px" width="12" height="10" viewBox="0 0 12 10"><rect x="0" y="0" width="12" height="10" rx="1" fill="#6a6a6e"/><g fill="#4a4a4e"><rect x="2.5" y="2" width="7" height="0.9"/><rect x="2.5" y="4.5" width="7" height="0.9"/><rect x="2.5" y="7" width="7" height="0.9"/></g></svg>
<div class="a" style="left:0.00px;top:11.10px;width:167.00px;height:19.30px;background:#232327;"></div>
<div class="a" style="left:0.00px;top:29.60px;width:167.00px;height:0.80px;background:#18181b;"></div>
<div class="a" style="left:167.00px;top:29.60px;width:722.00px;height:0.80px;background:#252529;"></div>
<div class="a" style="left:0.30px;top:11.10px;width:2.80px;height:19.30px;background:#3f72a6;"></div>
<div class="a" style="left:14.00px;top:11.10px;width:0.80px;height:19.30px;background:#1a1a1d;"></div>
<div class="a" style="left:46.00px;top:11.10px;width:0.80px;height:19.30px;background:#1a1a1d;"></div>
<div class="a t" style="left:-18.20px;width:100px;text-align:center;top:15.25px;font-size:10px;line-height:11.5px;color:#e8e8ec;font-weight:bold;">V5</div>
<svg class="a" style="left:56.00px;top:16.60px" width="10" height="9" viewBox="0 0 10 9"><rect x="1" y="3.5" width="8" height="5" fill="#4a4a4e"/><path d="M3 3.5 V2 a2 2 0 0 1 4 0 V3.5" fill="none" stroke="#4a4a4e" stroke-width="1"/></svg>
<svg class="a" style="left:74.50px;top:15.80px" width="13" height="10" viewBox="0 0 13 10"><rect x="0.7" y="0.7" width="11.6" height="8.6" rx="1" fill="none" stroke="#dcdcdc" stroke-width="1.3"/><path d="M5 3 L3.3 5 L5 7 M8 3 L9.7 5 L8 7" fill="none" stroke="#dcdcdc" stroke-width="1"/><circle cx="6.5" cy="5" r="0.8" fill="#dcdcdc"/></svg>
<svg class="a" style="left:95.00px;top:15.60px" width="12" height="10" viewBox="0 0 12 10"><rect x="0" y="0" width="12" height="10" rx="1" fill="#6a6a6e"/><g fill="#4a4a4e"><rect x="2.5" y="2" width="7" height="0.9"/><rect x="2.5" y="4.5" width="7" height="0.9"/><rect x="2.5" y="7" width="7" height="0.9"/></g></svg>
<div class="a" style="left:0.00px;top:30.40px;width:167.00px;height:19.30px;background:#232327;"></div>
<div class="a" style="left:0.00px;top:48.90px;width:167.00px;height:0.80px;background:#18181b;"></div>
<div class="a" style="left:167.00px;top:48.90px;width:722.00px;height:0.80px;background:#252529;"></div>
<div class="a" style="left:0.30px;top:30.40px;width:2.80px;height:19.30px;background:#3f72a6;"></div>
<div class="a" style="left:14.00px;top:30.40px;width:0.80px;height:19.30px;background:#1a1a1d;"></div>
<div class="a" style="left:46.00px;top:30.40px;width:0.80px;height:19.30px;background:#1a1a1d;"></div>
<div class="a t" style="left:-18.20px;width:100px;text-align:center;top:34.55px;font-size:10px;line-height:11.5px;color:#e8e8ec;font-weight:bold;">V4</div>
<svg class="a" style="left:56.00px;top:35.90px" width="10" height="9" viewBox="0 0 10 9"><rect x="1" y="3.5" width="8" height="5" fill="#4a4a4e"/><path d="M3 3.5 V2 a2 2 0 0 1 4 0 V3.5" fill="none" stroke="#4a4a4e" stroke-width="1"/></svg>
<svg class="a" style="left:74.50px;top:35.10px" width="13" height="10" viewBox="0 0 13 10"><rect x="0.7" y="0.7" width="11.6" height="8.6" rx="1" fill="none" stroke="#dcdcdc" stroke-width="1.3"/><path d="M5 3 L3.3 5 L5 7 M8 3 L9.7 5 L8 7" fill="none" stroke="#dcdcdc" stroke-width="1"/><circle cx="6.5" cy="5" r="0.8" fill="#dcdcdc"/></svg>
<svg class="a" style="left:95.00px;top:34.90px" width="12" height="10" viewBox="0 0 12 10"><rect x="0" y="0" width="12" height="10" rx="1" fill="#6a6a6e"/><g fill="#4a4a4e"><rect x="2.5" y="2" width="7" height="0.9"/><rect x="2.5" y="4.5" width="7" height="0.9"/><rect x="2.5" y="7" width="7" height="0.9"/></g></svg>
<div class="a" style="left:0.00px;top:49.70px;width:167.00px;height:19.30px;background:#232327;"></div>
<div class="a" style="left:0.00px;top:68.20px;width:167.00px;height:0.80px;background:#18181b;"></div>
<div class="a" style="left:167.00px;top:68.20px;width:722.00px;height:0.80px;background:#252529;"></div>
<div class="a" style="left:0.30px;top:49.70px;width:2.80px;height:19.30px;background:#3f72a6;"></div>
<div class="a" style="left:14.00px;top:49.70px;width:0.80px;height:19.30px;background:#1a1a1d;"></div>
<div class="a" style="left:46.00px;top:49.70px;width:0.80px;height:19.30px;background:#1a1a1d;"></div>
<div class="a t" style="left:-18.20px;width:100px;text-align:center;top:53.85px;font-size:10px;line-height:11.5px;color:#e8e8ec;font-weight:bold;">V3</div>
<svg class="a" style="left:56.00px;top:55.20px" width="10" height="9" viewBox="0 0 10 9"><rect x="1" y="3.5" width="8" height="5" fill="#4a4a4e"/><path d="M3 3.5 V2 a2 2 0 0 1 4 0 V3.5" fill="none" stroke="#4a4a4e" stroke-width="1"/></svg>
<svg class="a" style="left:74.50px;top:54.40px" width="13" height="10" viewBox="0 0 13 10"><rect x="0.7" y="0.7" width="11.6" height="8.6" rx="1" fill="none" stroke="#dcdcdc" stroke-width="1.3"/><path d="M5 3 L3.3 5 L5 7 M8 3 L9.7 5 L8 7" fill="none" stroke="#dcdcdc" stroke-width="1"/><circle cx="6.5" cy="5" r="0.8" fill="#dcdcdc"/></svg>
<svg class="a" style="left:95.00px;top:54.20px" width="12" height="10" viewBox="0 0 12 10"><rect x="0" y="0" width="12" height="10" rx="1" fill="#6a6a6e"/><g fill="#4a4a4e"><rect x="2.5" y="2" width="7" height="0.9"/><rect x="2.5" y="4.5" width="7" height="0.9"/><rect x="2.5" y="7" width="7" height="0.9"/></g></svg>
<div class="a" style="left:0.00px;top:69.00px;width:167.00px;height:19.30px;background:#232327;"></div>
<div class="a" style="left:0.00px;top:87.50px;width:167.00px;height:0.80px;background:#18181b;"></div>
<div class="a" style="left:167.00px;top:87.50px;width:722.00px;height:0.80px;background:#252529;"></div>
<div class="a" style="left:0.30px;top:69.00px;width:2.80px;height:19.30px;background:#3f72a6;"></div>
<div class="a" style="left:14.00px;top:69.00px;width:0.80px;height:19.30px;background:#1a1a1d;"></div>
<div class="a" style="left:46.00px;top:69.00px;width:0.80px;height:19.30px;background:#1a1a1d;"></div>
<div class="a t" style="left:-18.20px;width:100px;text-align:center;top:73.15px;font-size:10px;line-height:11.5px;color:#e8e8ec;font-weight:bold;">V2</div>
<svg class="a" style="left:56.00px;top:74.50px" width="10" height="9" viewBox="0 0 10 9"><rect x="1" y="3.5" width="8" height="5" fill="#4a4a4e"/><path d="M3 3.5 V2 a2 2 0 0 1 4 0 V3.5" fill="none" stroke="#4a4a4e" stroke-width="1"/></svg>
<svg class="a" style="left:74.50px;top:73.70px" width="13" height="10" viewBox="0 0 13 10"><rect x="0.7" y="0.7" width="11.6" height="8.6" rx="1" fill="none" stroke="#dcdcdc" stroke-width="1.3"/><path d="M5 3 L3.3 5 L5 7 M8 3 L9.7 5 L8 7" fill="none" stroke="#dcdcdc" stroke-width="1"/><circle cx="6.5" cy="5" r="0.8" fill="#dcdcdc"/></svg>
<svg class="a" style="left:95.00px;top:73.50px" width="12" height="10" viewBox="0 0 12 10"><rect x="0" y="0" width="12" height="10" rx="1" fill="#6a6a6e"/><g fill="#4a4a4e"><rect x="2.5" y="2" width="7" height="0.9"/><rect x="2.5" y="4.5" width="7" height="0.9"/><rect x="2.5" y="7" width="7" height="0.9"/></g></svg>
<div class="a" style="left:0.00px;top:88.30px;width:167.00px;height:19.30px;background:#232327;"></div>
<div class="a" style="left:0.00px;top:106.80px;width:167.00px;height:0.80px;background:#18181b;"></div>
<div class="a" style="left:167.00px;top:106.80px;width:722.00px;height:0.80px;background:#252529;"></div>
<div class="a" style="left:0.30px;top:88.30px;width:2.80px;height:19.30px;background:#3f72a6;"></div>
<div class="a" style="left:14.00px;top:88.30px;width:0.80px;height:19.30px;background:#1a1a1d;"></div>
<div class="a" style="left:46.00px;top:88.30px;width:0.80px;height:19.30px;background:#1a1a1d;"></div>
<div class="a t" style="left:-18.20px;width:100px;text-align:center;top:92.45px;font-size:10px;line-height:11.5px;color:#e8e8ec;font-weight:bold;">V1</div>
<div class="a" style="left:20.00px;top:90.20px;width:23.20px;height:15.00px;background:transparent;border:1px solid #c0303a"></div>
<svg class="a" style="left:56.00px;top:93.80px" width="10" height="9" viewBox="0 0 10 9"><rect x="1" y="3.5" width="8" height="5" fill="#4a4a4e"/><path d="M3 3.5 V2 a2 2 0 0 1 4 0 V3.5" fill="none" stroke="#4a4a4e" stroke-width="1"/></svg>
<svg class="a" style="left:74.50px;top:93.00px" width="13" height="10" viewBox="0 0 13 10"><rect x="0.7" y="0.7" width="11.6" height="8.6" rx="1" fill="none" stroke="#dcdcdc" stroke-width="1.3"/><path d="M5 3 L3.3 5 L5 7 M8 3 L9.7 5 L8 7" fill="none" stroke="#dcdcdc" stroke-width="1"/><circle cx="6.5" cy="5" r="0.8" fill="#dcdcdc"/></svg>
<svg class="a" style="left:95.00px;top:92.80px" width="12" height="10" viewBox="0 0 12 10"><rect x="0" y="0" width="12" height="10" rx="1" fill="#6a6a6e"/><g fill="#4a4a4e"><rect x="2.5" y="2" width="7" height="0.9"/><rect x="2.5" y="4.5" width="7" height="0.9"/><rect x="2.5" y="7" width="7" height="0.9"/></g></svg>
<div class="a" style="left:0.00px;top:110.20px;width:167.00px;height:19.30px;background:#232327;"></div>
<div class="a" style="left:0.00px;top:128.70px;width:167.00px;height:0.80px;background:#18181b;"></div>
<div class="a" style="left:167.00px;top:128.70px;width:722.00px;height:0.80px;background:#252529;"></div>
<div class="a" style="left:0.30px;top:110.20px;width:2.80px;height:19.30px;background:#3f9a5e;"></div>
<div class="a" style="left:14.00px;top:110.20px;width:0.80px;height:19.30px;background:#1a1a1d;"></div>
<div class="a" style="left:46.00px;top:110.20px;width:0.80px;height:19.30px;background:#1a1a1d;"></div>
<div class="a t" style="left:-18.20px;width:100px;text-align:center;top:114.35px;font-size:10px;line-height:11.5px;color:#e8e8ec;font-weight:bold;">A1</div>
<div class="a" style="left:20.00px;top:112.10px;width:23.20px;height:15.00px;background:transparent;border:1px solid #c0303a"></div>
<svg class="a" style="left:56.00px;top:115.70px" width="10" height="9" viewBox="0 0 10 9"><rect x="1" y="3.5" width="8" height="5" fill="#4a4a4e"/><path d="M3 3.5 V2 a2 2 0 0 1 4 0 V3.5" fill="none" stroke="#4a4a4e" stroke-width="1"/></svg>
<svg class="a" style="left:74.50px;top:114.90px" width="13" height="10" viewBox="0 0 13 10"><rect x="0.7" y="0.7" width="11.6" height="8.6" rx="1" fill="none" stroke="#dcdcdc" stroke-width="1.3"/><path d="M5 3 L3.3 5 L5 7 M8 3 L9.7 5 L8 7" fill="none" stroke="#dcdcdc" stroke-width="1"/><circle cx="6.5" cy="5" r="0.8" fill="#dcdcdc"/></svg>
<div class="a" style="left:95.40px;top:113.70px;width:12.00px;height:12.00px;background:#36363a;border-radius:1px"></div>
<div class="a t" style="left:51.40px;width:100px;text-align:center;top:115.59px;font-size:8.2px;line-height:9.4px;color:#7a7a7e;font-weight:normal;">S</div>
<div class="a" style="left:115.70px;top:113.70px;width:12.30px;height:12.00px;background:#36363a;border-radius:1px"></div>
<div class="a t" style="left:71.80px;width:100px;text-align:center;top:115.59px;font-size:8.2px;line-height:9.4px;color:#7a7a7e;font-weight:normal;">M</div>
<div class="a t" style="left:121.00px;width:40px;text-align:right;top:115.45px;font-size:8.4px;line-height:9px;color:#7a7a7e">2.0</div>
<div class="a" style="left:0.00px;top:129.30px;width:167.00px;height:19.30px;background:#232327;"></div>
<div class="a" style="left:0.00px;top:147.80px;width:167.00px;height:0.80px;background:#18181b;"></div>
<div class="a" style="left:167.00px;top:147.80px;width:722.00px;height:0.80px;background:#252529;"></div>
<div class="a" style="left:0.30px;top:129.30px;width:2.80px;height:19.30px;background:#3f9a5e;"></div>
<div class="a" style="left:14.00px;top:129.30px;width:0.80px;height:19.30px;background:#1a1a1d;"></div>
<div class="a" style="left:46.00px;top:129.30px;width:0.80px;height:19.30px;background:#1a1a1d;"></div>
<div class="a t" style="left:-18.20px;width:100px;text-align:center;top:133.45px;font-size:10px;line-height:11.5px;color:#8a8a8e;font-weight:bold;">A2</div>
<svg class="a" style="left:56.00px;top:134.80px" width="10" height="9" viewBox="0 0 10 9"><rect x="1" y="3.5" width="8" height="5" fill="#4a4a4e"/><path d="M3 3.5 V2 a2 2 0 0 1 4 0 V3.5" fill="none" stroke="#4a4a4e" stroke-width="1"/></svg>
<svg class="a" style="left:74.50px;top:134.00px" width="13" height="10" viewBox="0 0 13 10"><rect x="0.7" y="0.7" width="11.6" height="8.6" rx="1" fill="none" stroke="#dcdcdc" stroke-width="1.3"/><path d="M5 3 L3.3 5 L5 7 M8 3 L9.7 5 L8 7" fill="none" stroke="#dcdcdc" stroke-width="1"/><circle cx="6.5" cy="5" r="0.8" fill="#dcdcdc"/></svg>
<div class="a" style="left:95.40px;top:132.80px;width:12.00px;height:12.00px;background:#36363a;border-radius:1px"></div>
<div class="a t" style="left:51.40px;width:100px;text-align:center;top:134.69px;font-size:8.2px;line-height:9.4px;color:#7a7a7e;font-weight:normal;">S</div>
<div class="a" style="left:115.70px;top:132.80px;width:12.30px;height:12.00px;background:#36363a;border-radius:1px"></div>
<div class="a t" style="left:71.80px;width:100px;text-align:center;top:134.69px;font-size:8.2px;line-height:9.4px;color:#7a7a7e;font-weight:normal;">M</div>
<div class="a t" style="left:121.00px;width:40px;text-align:right;top:134.55px;font-size:8.4px;line-height:9px;color:#7a7a7e">2.0</div>
<div class="a" style="left:0.00px;top:148.60px;width:167.00px;height:19.30px;background:#232327;"></div>
<div class="a" style="left:0.00px;top:167.10px;width:167.00px;height:0.80px;background:#18181b;"></div>
<div class="a" style="left:167.00px;top:167.10px;width:722.00px;height:0.80px;background:#252529;"></div>
<div class="a" style="left:0.30px;top:148.60px;width:2.80px;height:19.30px;background:#3f9a5e;"></div>
<div class="a" style="left:14.00px;top:148.60px;width:0.80px;height:19.30px;background:#1a1a1d;"></div>
<div class="a" style="left:46.00px;top:148.60px;width:0.80px;height:19.30px;background:#1a1a1d;"></div>
<div class="a t" style="left:-18.20px;width:100px;text-align:center;top:152.75px;font-size:10px;line-height:11.5px;color:#8a8a8e;font-weight:bold;">A3</div>
<svg class="a" style="left:56.00px;top:154.10px" width="10" height="9" viewBox="0 0 10 9"><rect x="1" y="3.5" width="8" height="5" fill="#4a4a4e"/><path d="M3 3.5 V2 a2 2 0 0 1 4 0 V3.5" fill="none" stroke="#4a4a4e" stroke-width="1"/></svg>
<svg class="a" style="left:74.50px;top:153.30px" width="13" height="10" viewBox="0 0 13 10"><rect x="0.7" y="0.7" width="11.6" height="8.6" rx="1" fill="none" stroke="#dcdcdc" stroke-width="1.3"/><path d="M5 3 L3.3 5 L5 7 M8 3 L9.7 5 L8 7" fill="none" stroke="#dcdcdc" stroke-width="1"/><circle cx="6.5" cy="5" r="0.8" fill="#dcdcdc"/></svg>
<div class="a" style="left:95.40px;top:152.10px;width:12.00px;height:12.00px;background:#36363a;border-radius:1px"></div>
<div class="a t" style="left:51.40px;width:100px;text-align:center;top:153.99px;font-size:8.2px;line-height:9.4px;color:#7a7a7e;font-weight:normal;">S</div>
<div class="a" style="left:115.70px;top:152.10px;width:12.30px;height:12.00px;background:#36363a;border-radius:1px"></div>
<div class="a t" style="left:71.80px;width:100px;text-align:center;top:153.99px;font-size:8.2px;line-height:9.4px;color:#7a7a7e;font-weight:normal;">M</div>
<div class="a t" style="left:121.00px;width:40px;text-align:right;top:153.85px;font-size:8.4px;line-height:9px;color:#7a7a7e">2.0</div>
<div class="a" style="left:0.00px;top:167.80px;width:167.00px;height:19.30px;background:#232327;"></div>
<div class="a" style="left:0.00px;top:186.30px;width:167.00px;height:0.80px;background:#18181b;"></div>
<div class="a" style="left:167.00px;top:186.30px;width:722.00px;height:0.80px;background:#252529;"></div>
<div class="a" style="left:0.30px;top:167.80px;width:2.80px;height:19.30px;background:#3f9a5e;"></div>
<div class="a" style="left:14.00px;top:167.80px;width:0.80px;height:19.30px;background:#1a1a1d;"></div>
<div class="a" style="left:46.00px;top:167.80px;width:0.80px;height:19.30px;background:#1a1a1d;"></div>
<div class="a t" style="left:-18.20px;width:100px;text-align:center;top:171.95px;font-size:10px;line-height:11.5px;color:#8a8a8e;font-weight:bold;">A4</div>
<svg class="a" style="left:56.00px;top:173.30px" width="10" height="9" viewBox="0 0 10 9"><rect x="1" y="3.5" width="8" height="5" fill="#4a4a4e"/><path d="M3 3.5 V2 a2 2 0 0 1 4 0 V3.5" fill="none" stroke="#4a4a4e" stroke-width="1"/></svg>
<svg class="a" style="left:74.50px;top:172.50px" width="13" height="10" viewBox="0 0 13 10"><rect x="0.7" y="0.7" width="11.6" height="8.6" rx="1" fill="none" stroke="#dcdcdc" stroke-width="1.3"/><path d="M5 3 L3.3 5 L5 7 M8 3 L9.7 5 L8 7" fill="none" stroke="#dcdcdc" stroke-width="1"/><circle cx="6.5" cy="5" r="0.8" fill="#dcdcdc"/></svg>
<div class="a" style="left:95.40px;top:171.30px;width:12.00px;height:12.00px;background:#36363a;border-radius:1px"></div>
<div class="a t" style="left:51.40px;width:100px;text-align:center;top:173.19px;font-size:8.2px;line-height:9.4px;color:#7a7a7e;font-weight:normal;">S</div>
<div class="a" style="left:115.70px;top:171.30px;width:12.30px;height:12.00px;background:#36363a;border-radius:1px"></div>
<div class="a t" style="left:71.80px;width:100px;text-align:center;top:173.19px;font-size:8.2px;line-height:9.4px;color:#7a7a7e;font-weight:normal;">M</div>
<div class="a t" style="left:121.00px;width:40px;text-align:right;top:173.05px;font-size:8.4px;line-height:9px;color:#7a7a7e">2.0</div>
<div class="a" style="left:0.00px;top:187.00px;width:167.00px;height:19.30px;background:#232327;"></div>
<div class="a" style="left:0.00px;top:205.50px;width:167.00px;height:0.80px;background:#18181b;"></div>
<div class="a" style="left:167.00px;top:205.50px;width:722.00px;height:0.80px;background:#252529;"></div>
<div class="a" style="left:0.30px;top:187.00px;width:2.80px;height:19.30px;background:#3f9a5e;"></div>
<div class="a" style="left:14.00px;top:187.00px;width:0.80px;height:19.30px;background:#1a1a1d;"></div>
<div class="a" style="left:46.00px;top:187.00px;width:0.80px;height:19.30px;background:#1a1a1d;"></div>
<div class="a t" style="left:-18.20px;width:100px;text-align:center;top:191.15px;font-size:10px;line-height:11.5px;color:#8a8a8e;font-weight:bold;">A5</div>
<svg class="a" style="left:56.00px;top:192.50px" width="10" height="9" viewBox="0 0 10 9"><rect x="1" y="3.5" width="8" height="5" fill="#4a4a4e"/><path d="M3 3.5 V2 a2 2 0 0 1 4 0 V3.5" fill="none" stroke="#4a4a4e" stroke-width="1"/></svg>
<svg class="a" style="left:74.50px;top:191.70px" width="13" height="10" viewBox="0 0 13 10"><rect x="0.7" y="0.7" width="11.6" height="8.6" rx="1" fill="none" stroke="#dcdcdc" stroke-width="1.3"/><path d="M5 3 L3.3 5 L5 7 M8 3 L9.7 5 L8 7" fill="none" stroke="#dcdcdc" stroke-width="1"/><circle cx="6.5" cy="5" r="0.8" fill="#dcdcdc"/></svg>
<div class="a" style="left:95.40px;top:190.50px;width:12.00px;height:12.00px;background:#36363a;border-radius:1px"></div>
<div class="a t" style="left:51.40px;width:100px;text-align:center;top:192.39px;font-size:8.2px;line-height:9.4px;color:#7a7a7e;font-weight:normal;">S</div>
<div class="a" style="left:115.70px;top:190.50px;width:12.30px;height:12.00px;background:#36363a;border-radius:1px"></div>
<div class="a t" style="left:71.80px;width:100px;text-align:center;top:192.39px;font-size:8.2px;line-height:9.4px;color:#7a7a7e;font-weight:normal;">M</div>
<div class="a t" style="left:121.00px;width:40px;text-align:right;top:192.25px;font-size:8.4px;line-height:9px;color:#7a7a7e">2.0</div>
<div class="a" style="left:0.00px;top:206.20px;width:167.00px;height:19.30px;background:#232327;"></div>
<div class="a" style="left:0.00px;top:224.70px;width:167.00px;height:0.80px;background:#18181b;"></div>
<div class="a" style="left:167.00px;top:224.70px;width:722.00px;height:0.80px;background:#252529;"></div>
<div class="a" style="left:0.30px;top:206.20px;width:2.80px;height:19.30px;background:#3f9a5e;"></div>
<div class="a" style="left:14.00px;top:206.20px;width:0.80px;height:19.30px;background:#1a1a1d;"></div>
<div class="a" style="left:46.00px;top:206.20px;width:0.80px;height:19.30px;background:#1a1a1d;"></div>
<div class="a t" style="left:-18.20px;width:100px;text-align:center;top:210.35px;font-size:10px;line-height:11.5px;color:#8a8a8e;font-weight:bold;">A6</div>
<svg class="a" style="left:56.00px;top:211.70px" width="10" height="9" viewBox="0 0 10 9"><rect x="1" y="3.5" width="8" height="5" fill="#4a4a4e"/><path d="M3 3.5 V2 a2 2 0 0 1 4 0 V3.5" fill="none" stroke="#4a4a4e" stroke-width="1"/></svg>
<svg class="a" style="left:74.50px;top:210.90px" width="13" height="10" viewBox="0 0 13 10"><rect x="0.7" y="0.7" width="11.6" height="8.6" rx="1" fill="none" stroke="#dcdcdc" stroke-width="1.3"/><path d="M5 3 L3.3 5 L5 7 M8 3 L9.7 5 L8 7" fill="none" stroke="#dcdcdc" stroke-width="1"/><circle cx="6.5" cy="5" r="0.8" fill="#dcdcdc"/></svg>
<div class="a" style="left:95.40px;top:209.70px;width:12.00px;height:12.00px;background:#36363a;border-radius:1px"></div>
<div class="a t" style="left:51.40px;width:100px;text-align:center;top:211.59px;font-size:8.2px;line-height:9.4px;color:#7a7a7e;font-weight:normal;">S</div>
<div class="a" style="left:115.70px;top:209.70px;width:12.30px;height:12.00px;background:#36363a;border-radius:1px"></div>
<div class="a t" style="left:71.80px;width:100px;text-align:center;top:211.59px;font-size:8.2px;line-height:9.4px;color:#7a7a7e;font-weight:normal;">M</div>
<div class="a t" style="left:121.00px;width:40px;text-align:right;top:211.45px;font-size:8.4px;line-height:9px;color:#7a7a7e">2.0</div>
<div class="a" style="left:0.00px;top:107.00px;width:889.00px;height:3.00px;background:#18181b;"></div>
<div class="a" style="left:0.00px;top:108.00px;width:889.00px;height:1.00px;background:#3a3a3e;"></div>
<div class="a" style="left:166.50px;top:0.00px;width:1.00px;height:224.00px;background:#141416;"></div>
<div class="a" style="left:451.25px;top:-7.70px;width:145.75px;height:16.8px;background:#4a6b8e;border-radius:1.5px;overflow:hidden">
<div class="a t" style="left:38px;top:4.6px;font-size:8.2px;line-height:10px;color:#e4ecf2">Isolated logo</div>
<svg class="a" style="left:5px;top:3px" width="11" height="11" viewBox="0 0 11 11"><path d="M2.2 8.8 A4.3 4.3 0 1 1 8.8 8.8" fill="none" stroke="#d8dee4" stroke-width="1.1"/><path d="M5.5 6 L7.5 3.5" stroke="#d8dee4" stroke-width="1.1"/></svg><svg class="a" style="left:27px;top:3px" width="10" height="11" viewBox="0 0 10 11"><path d="M3.5 3 L4.3 5.2 L6.5 6 L4.3 6.8 L3.5 9 L2.7 6.8 L0.5 6 L2.7 5.2Z" fill="#dde4ea"/><circle cx="7.8" cy="2.2" r="1.1" fill="#dde4ea"/><circle cx="8" cy="8.5" r="0.9" fill="#dde4ea"/></svg>
</div>
<div class="a" style="left:451.25px;top:12.10px;width:145.75px;height:16.8px;background:#4a6b8e;border-radius:1.5px;overflow:hidden">
<div class="a t" style="left:38px;top:4.6px;font-size:8.2px;line-height:10px;color:#e4ecf2">Isolated: Ballhead...</div>
<svg class="a" style="left:5px;top:3px" width="11" height="11" viewBox="0 0 11 11"><path d="M2.2 8.8 A4.3 4.3 0 1 1 8.8 8.8" fill="none" stroke="#d8dee4" stroke-width="1.1"/><path d="M5.5 6 L7.5 3.5" stroke="#d8dee4" stroke-width="1.1"/></svg><svg class="a" style="left:27px;top:3px" width="10" height="11" viewBox="0 0 10 11"><path d="M3.5 3 L4.3 5.2 L6.5 6 L4.3 6.8 L3.5 9 L2.7 6.8 L0.5 6 L2.7 5.2Z" fill="#dde4ea"/><circle cx="7.8" cy="2.2" r="1.1" fill="#dde4ea"/><circle cx="8" cy="8.5" r="0.9" fill="#dde4ea"/></svg><svg class="a" style="left:115.75px;top:3px" width="12" height="11" viewBox="0 0 12 11"><path d="M0.8 2.5 Q2.5 1 4 3 L7.5 8 Q9 10 11.2 8.5" fill="none" stroke="#0c0c0e" stroke-width="1.7"/></svg><svg class="a" style="left:130.25px;top:3.2px" width="10" height="10" viewBox="0 0 10 10"><path d="M5 0.8 L9.2 5 L5 9.2 L0.8 5Z" fill="#0c0c0e"/><path d="M5 2.2 L3 5 L5 7.8" fill="none" stroke="#9ab" stroke-width="0.7" opacity="0.5"/></svg>
</div>
<div class="a" style="left:326.90px;top:31.40px;width:44.35px;height:16.8px;background:#1f6e94;border-radius:1.5px;overflow:hidden">
<div class="a t" style="left:3.5px;top:4.6px;font-size:8.2px;line-height:10px;color:#e4ecf2">Zoo...</div>
<svg class="a" style="left:28.85px;top:3.2px" width="10" height="10" viewBox="0 0 10 10"><path d="M5 0.8 L9.2 5 L5 9.2 L0.8 5Z" fill="#0c0c0e"/><path d="M5 2.2 L3 5 L5 7.8" fill="none" stroke="#9ab" stroke-width="0.7" opacity="0.5"/></svg>
</div>
<div class="a" style="left:372.80px;top:31.40px;width:77.00px;height:16.8px;background:#1f6e94;border-radius:1.5px;overflow:hidden">
<div class="a t" style="left:3.5px;top:4.6px;font-size:8.2px;line-height:10px;color:#e4ecf2">Zoom in...</div>
<svg class="a" style="left:46px;top:3px" width="12" height="11" viewBox="0 0 12 11"><path d="M0.8 2.5 Q2.5 1 4 3 L7.5 8 Q9 10 11.2 8.5" fill="none" stroke="#0c0c0e" stroke-width="1.7"/></svg><svg class="a" style="left:61.5px;top:3.2px" width="10" height="10" viewBox="0 0 10 10"><path d="M5 0.8 L9.2 5 L5 9.2 L0.8 5Z" fill="#0c0c0e"/><path d="M5 2.2 L3 5 L5 7.8" fill="none" stroke="#9ab" stroke-width="0.7" opacity="0.5"/></svg>
</div>
<div class="a" style="left:484.40px;top:31.40px;width:19.60px;height:16.8px;background:#4a6b8e;border-radius:1.5px;overflow:hidden">
<div class="a t" style="left:3.5px;top:4.6px;font-size:8.2px;line-height:10px;color:#e4ecf2">Is...</div>

</div>
<div class="a" style="left:506.25px;top:31.40px;width:16.45px;height:16.8px;background:#4a6b8e;border-radius:1.5px;overflow:hidden">

</div>
<div class="a" style="left:524.70px;top:31.40px;width:72.30px;height:16.8px;background:#4a6b8e;border-radius:1.5px;overflow:hidden">
<div class="a t" style="left:52px;top:4.6px;font-size:8.2px;line-height:10px;color:#e4ecf2">Is...</div>
<svg class="a" style="left:4px;top:4px" width="13" height="9" viewBox="0 0 13 9"><rect x="0.6" y="0.6" width="11.8" height="7.8" fill="none" stroke="#cfd8e0" stroke-width="1"/><rect x="3" y="2.6" width="7" height="3.8" fill="none" stroke="#cfd8e0" stroke-width="0.8"/></svg><svg class="a" style="left:21px;top:3px" width="11" height="11" viewBox="0 0 11 11"><path d="M2.2 8.8 A4.3 4.3 0 1 1 8.8 8.8" fill="none" stroke="#d8dee4" stroke-width="1.1"/><path d="M5.5 6 L7.5 3.5" stroke="#d8dee4" stroke-width="1.1"/></svg><svg class="a" style="left:40px;top:3px" width="10" height="11" viewBox="0 0 10 11"><path d="M3.5 3 L4.3 5.2 L6.5 6 L4.3 6.8 L3.5 9 L2.7 6.8 L0.5 6 L2.7 5.2Z" fill="#dde4ea"/><circle cx="7.8" cy="2.2" r="1.1" fill="#dde4ea"/><circle cx="8" cy="8.5" r="0.9" fill="#dde4ea"/></svg>
</div>
<div class="a" style="left:651.00px;top:31.40px;width:50.70px;height:16.8px;background:#4a6b8e;border-radius:1.5px;overflow:hidden">
<div class="a t" style="left:3.5px;top:4.6px;font-size:8.2px;line-height:10px;color:#e4ecf2">P127...</div>
<svg class="a" style="left:35.2px;top:3.2px" width="10" height="10" viewBox="0 0 10 10"><path d="M5 0.8 L9.2 5 L5 9.2 L0.8 5Z" fill="#0c0c0e"/><path d="M5 2.2 L3 5 L5 7.8" fill="none" stroke="#9ab" stroke-width="0.7" opacity="0.5"/></svg>
</div>
<div class="a" style="left:272.50px;top:50.80px;width:53.50px;height:16.8px;background:#1f6e94;border-radius:1.5px;overflow:hidden">
<div class="a t" style="left:3.5px;top:4.6px;font-size:8.2px;line-height:10px;color:#e4ecf2">Zoom ...</div>
<svg class="a" style="left:38.0px;top:3.2px" width="10" height="10" viewBox="0 0 10 10"><path d="M5 0.8 L9.2 5 L5 9.2 L0.8 5Z" fill="#0c0c0e"/><path d="M5 2.2 L3 5 L5 7.8" fill="none" stroke="#9ab" stroke-width="0.7" opacity="0.5"/></svg>
</div>
<div class="a" style="left:468.00px;top:50.80px;width:50.75px;height:16.8px;background:#3f79ae;border-radius:1.5px;overflow:hidden">
<div class="a t" style="left:19px;top:4.6px;font-size:8.2px;line-height:10px;color:#e4ecf2">Isolat...</div>
<svg class="a" style="left:4px;top:4px" width="13" height="9" viewBox="0 0 13 9"><rect x="0.6" y="0.6" width="11.8" height="7.8" fill="none" stroke="#cfd8e0" stroke-width="1"/><rect x="3" y="2.6" width="7" height="3.8" fill="none" stroke="#cfd8e0" stroke-width="0.8"/></svg>
</div>
<div class="a" style="left:520.50px;top:50.80px;width:76.50px;height:16.8px;background:#4a6b8e;border-radius:1.5px;overflow:hidden">
<div class="a t" style="left:37px;top:4.6px;font-size:8.2px;line-height:10px;color:#e4ecf2">Isolated...</div>
<svg class="a" style="left:4px;top:4px" width="13" height="9" viewBox="0 0 13 9"><rect x="0.6" y="0.6" width="11.8" height="7.8" fill="none" stroke="#cfd8e0" stroke-width="1"/><rect x="3" y="2.6" width="7" height="3.8" fill="none" stroke="#cfd8e0" stroke-width="0.8"/></svg><svg class="a" style="left:21px;top:3px" width="11" height="11" viewBox="0 0 11 11"><path d="M2.2 8.8 A4.3 4.3 0 1 1 8.8 8.8" fill="none" stroke="#d8dee4" stroke-width="1.1"/><path d="M5.5 6 L7.5 3.5" stroke="#d8dee4" stroke-width="1.1"/></svg>
</div>
<div class="a" style="left:608.30px;top:50.80px;width:40.70px;height:16.8px;background:#4a6b8e;border-radius:1.5px;overflow:hidden">
<div class="a t" style="left:3.5px;top:4.6px;font-size:8.2px;line-height:10px;color:#e4ecf2">P1...</div>
<svg class="a" style="left:25.200000000000003px;top:3.2px" width="10" height="10" viewBox="0 0 10 10"><path d="M5 0.8 L9.2 5 L5 9.2 L0.8 5Z" fill="#0c0c0e"/><path d="M5 2.2 L3 5 L5 7.8" fill="none" stroke="#9ab" stroke-width="0.7" opacity="0.5"/></svg>
</div>
<div class="a" style="left:651.00px;top:50.80px;width:50.70px;height:16.8px;background:#4a6b8e;border-radius:1.5px;overflow:hidden">
<div class="a t" style="left:3.5px;top:4.6px;font-size:8.2px;line-height:10px;color:#e4ecf2">P127...</div>
<svg class="a" style="left:35.2px;top:3.2px" width="10" height="10" viewBox="0 0 10 10"><path d="M5 0.8 L9.2 5 L5 9.2 L0.8 5Z" fill="#0c0c0e"/><path d="M5 2.2 L3 5 L5 7.8" fill="none" stroke="#9ab" stroke-width="0.7" opacity="0.5"/></svg>
</div>
<div class="a" style="left:761.70px;top:50.80px;width:13.50px;height:16.8px;background:#4a6b8e;border-radius:1.5px;overflow:hidden">

</div>
<div class="a" style="left:777.00px;top:50.80px;width:40.00px;height:16.8px;background:#4a6b8e;border-radius:1.5px;overflow:hidden">
<div class="a t" style="left:20px;top:4.6px;font-size:8.2px;line-height:10px;color:#e4ecf2">Ro...</div>
<svg class="a" style="left:4px;top:4px" width="13" height="9" viewBox="0 0 13 9"><rect x="0.6" y="0.6" width="11.8" height="7.8" fill="none" stroke="#cfd8e0" stroke-width="1"/><rect x="3" y="2.6" width="7" height="3.8" fill="none" stroke="#cfd8e0" stroke-width="0.8"/></svg>
</div>
<div class="a" style="left:167.00px;top:70.10px;width:50.80px;height:16.8px;background:#1f6e94;border-radius:1.5px;overflow:hidden">
<div class="a t" style="left:3.5px;top:4.6px;font-size:8.2px;line-height:10px;color:#e4ecf2">Zoom...</div>
<svg class="a" style="left:35.3px;top:3.2px" width="10" height="10" viewBox="0 0 10 10"><path d="M5 0.8 L9.2 5 L5 9.2 L0.8 5Z" fill="#0c0c0e"/><path d="M5 2.2 L3 5 L5 7.8" fill="none" stroke="#9ab" stroke-width="0.7" opacity="0.5"/></svg>
</div>
<div class="a" style="left:220.20px;top:70.10px;width:50.80px;height:16.8px;background:#1f6e94;border-radius:1.5px;overflow:hidden">
<div class="a t" style="left:3.5px;top:4.6px;font-size:8.2px;line-height:10px;color:#e4ecf2">Zoom...</div>
<svg class="a" style="left:35.3px;top:3.2px" width="10" height="10" viewBox="0 0 10 10"><path d="M5 0.8 L9.2 5 L5 9.2 L0.8 5Z" fill="#0c0c0e"/><path d="M5 2.2 L3 5 L5 7.8" fill="none" stroke="#9ab" stroke-width="0.7" opacity="0.5"/></svg>
</div>
<div class="a" style="left:297.80px;top:70.10px;width:27.80px;height:16.8px;background:#4a6b8e;border-radius:1.5px;overflow:hidden">
<div class="a t" style="left:3.5px;top:4.6px;font-size:8.2px;line-height:10px;color:#e4ecf2">Rot...</div>

</div>
<div class="a" style="left:331.60px;top:70.10px;width:40.10px;height:16.8px;background:#4a6b8e;border-radius:1.5px;overflow:hidden">
<div class="a t" style="left:20px;top:4.6px;font-size:8.2px;line-height:10px;color:#e4ecf2">Tri...</div>
<svg class="a" style="left:4px;top:4px" width="13" height="9" viewBox="0 0 13 9"><rect x="0.6" y="0.6" width="11.8" height="7.8" fill="none" stroke="#cfd8e0" stroke-width="1"/><rect x="3" y="2.6" width="7" height="3.8" fill="none" stroke="#cfd8e0" stroke-width="0.8"/></svg>
</div>
<div class="a" style="left:451.25px;top:70.10px;width:21.45px;height:16.8px;background:#4a6b8e;border-radius:1.5px;overflow:hidden">
<div class="a t" style="left:3.5px;top:4.6px;font-size:8.2px;line-height:10px;color:#e4ecf2">Is...</div>

</div>
<div class="a" style="left:598.40px;top:70.10px;width:50.60px;height:16.8px;background:#4a6b8e;border-radius:1.5px;overflow:hidden">
<div class="a t" style="left:3.5px;top:4.6px;font-size:8.2px;line-height:10px;color:#e4ecf2">P127...</div>
<svg class="a" style="left:35.1px;top:3.2px" width="10" height="10" viewBox="0 0 10 10"><path d="M5 0.8 L9.2 5 L5 9.2 L0.8 5Z" fill="#0c0c0e"/><path d="M5 2.2 L3 5 L5 7.8" fill="none" stroke="#9ab" stroke-width="0.7" opacity="0.5"/></svg>
</div>
<div class="a" style="left:651.00px;top:70.10px;width:31.80px;height:16.8px;background:#1f6e94;border-radius:1.5px;overflow:hidden">
<div class="a t" style="left:3.5px;top:4.6px;font-size:8.2px;line-height:10px;color:#e4ecf2">Adjus...</div>

</div>
<div class="a" style="left:761.70px;top:70.10px;width:55.30px;height:16.8px;background:#4a6b8e;border-radius:1.5px;overflow:hidden">
<div class="a t" style="left:3.5px;top:4.6px;font-size:8.2px;line-height:10px;color:#e4ecf2">Ed...</div>
<svg class="a" style="left:24.299999999999997px;top:3px" width="12" height="11" viewBox="0 0 12 11"><path d="M0.8 2.5 Q2.5 1 4 3 L7.5 8 Q9 10 11.2 8.5" fill="none" stroke="#0c0c0e" stroke-width="1.7"/></svg><svg class="a" style="left:39.8px;top:3.2px" width="10" height="10" viewBox="0 0 10 10"><path d="M5 0.8 L9.2 5 L5 9.2 L0.8 5Z" fill="#0c0c0e"/><path d="M5 2.2 L3 5 L5 7.8" fill="none" stroke="#9ab" stroke-width="0.7" opacity="0.5"/></svg>
</div>
<div class="a" style="left:818.70px;top:70.10px;width:68.30px;height:16.8px;background:#1f6e94;border-radius:1.5px;overflow:hidden">
<div class="a t" style="left:3.5px;top:4.6px;font-size:8.2px;line-height:10px;color:#e4ecf2">Adjus...</div>
<svg class="a" style="left:37.3px;top:3px" width="12" height="11" viewBox="0 0 12 11"><path d="M0.8 2.5 Q2.5 1 4 3 L7.5 8 Q9 10 11.2 8.5" fill="none" stroke="#0c0c0e" stroke-width="1.7"/></svg><svg class="a" style="left:52.8px;top:3.2px" width="10" height="10" viewBox="0 0 10 10"><path d="M5 0.8 L9.2 5 L5 9.2 L0.8 5Z" fill="#0c0c0e"/><path d="M5 2.2 L3 5 L5 7.8" fill="none" stroke="#9ab" stroke-width="0.7" opacity="0.5"/></svg>
</div>
<div class="a" style="left:167.00px;top:89.50px;width:50.80px;height:16.8px;background:#4a6b8e;border-radius:1.5px;overflow:hidden">
<div class="a t" style="left:3.5px;top:4.6px;font-size:8.2px;line-height:10px;color:#e4ecf2">P127...</div>
<svg class="a" style="left:35.3px;top:3.2px" width="10" height="10" viewBox="0 0 10 10"><path d="M5 0.8 L9.2 5 L5 9.2 L0.8 5Z" fill="#0c0c0e"/><path d="M5 2.2 L3 5 L5 7.8" fill="none" stroke="#9ab" stroke-width="0.7" opacity="0.5"/></svg>
</div>
<div class="a" style="left:220.20px;top:89.50px;width:50.80px;height:16.8px;background:#4a6b8e;border-radius:1.5px;overflow:hidden">
<div class="a t" style="left:3.5px;top:4.6px;font-size:8.2px;line-height:10px;color:#e4ecf2">P1279...</div>
<svg class="a" style="left:35.3px;top:3.2px" width="10" height="10" viewBox="0 0 10 10"><path d="M5 0.8 L9.2 5 L5 9.2 L0.8 5Z" fill="#0c0c0e"/><path d="M5 2.2 L3 5 L5 7.8" fill="none" stroke="#9ab" stroke-width="0.7" opacity="0.5"/></svg>
</div>
<div class="a" style="left:272.80px;top:89.50px;width:52.80px;height:16.8px;background:#3f79ae;border-radius:1.5px;overflow:hidden">
<div class="a t" style="left:3.5px;top:4.6px;font-size:8.2px;line-height:10px;color:#e4ecf2">P1279520...</div>

</div>
<div class="a" style="left:327.00px;top:89.50px;width:44.70px;height:16.8px;background:#4a6b8e;border-radius:1.5px;overflow:hidden">
<div class="a t" style="left:3.5px;top:4.6px;font-size:8.2px;line-height:10px;color:#e4ecf2">P12...</div>
<svg class="a" style="left:29.200000000000003px;top:3.2px" width="10" height="10" viewBox="0 0 10 10"><path d="M5 0.8 L9.2 5 L5 9.2 L0.8 5Z" fill="#0c0c0e"/><path d="M5 2.2 L3 5 L5 7.8" fill="none" stroke="#9ab" stroke-width="0.7" opacity="0.5"/></svg>
</div>
<div class="a" style="left:372.80px;top:89.50px;width:41.10px;height:16.8px;background:#3f79ae;border-radius:1.5px;overflow:hidden">
<div class="a t" style="left:3.5px;top:4.6px;font-size:8.2px;line-height:10px;color:#e4ecf2">P12795...</div>

</div>
<div class="a" style="left:415.00px;top:89.50px;width:34.80px;height:16.8px;background:#3f79ae;border-radius:1.5px;overflow:hidden">
<div class="a t" style="left:3.5px;top:4.6px;font-size:8.2px;line-height:10px;color:#e4ecf2">P1279...</div>

</div>
<div class="a" style="left:451.25px;top:89.50px;width:145.75px;height:16.8px;background:#4a6b8e;border-radius:1.5px;overflow:hidden">
<div class="a t" style="left:20px;top:4.6px;font-size:8.2px;line-height:10px;color:#e4ecf2">Background</div>
<svg class="a" style="left:5px;top:3px" width="11" height="11" viewBox="0 0 11 11"><path d="M2.2 8.8 A4.3 4.3 0 1 1 8.8 8.8" fill="none" stroke="#d8dee4" stroke-width="1.1"/><path d="M5.5 6 L7.5 3.5" stroke="#d8dee4" stroke-width="1.1"/></svg>
</div>
<div class="a" style="left:598.40px;top:89.50px;width:50.60px;height:16.8px;background:#4a6b8e;border-radius:1.5px;overflow:hidden">
<div class="a t" style="left:3.5px;top:4.6px;font-size:8.2px;line-height:10px;color:#e4ecf2">P127...</div>
<svg class="a" style="left:35.1px;top:3.2px" width="10" height="10" viewBox="0 0 10 10"><path d="M5 0.8 L9.2 5 L5 9.2 L0.8 5Z" fill="#0c0c0e"/><path d="M5 2.2 L3 5 L5 7.8" fill="none" stroke="#9ab" stroke-width="0.7" opacity="0.5"/></svg>
</div>
<div class="a" style="left:651.00px;top:89.50px;width:14.60px;height:16.8px;background:#4a6b8e;border-radius:1.5px;overflow:hidden">

</div>
<div class="a" style="left:667.00px;top:89.50px;width:34.70px;height:16.8px;background:#4a6b8e;border-radius:1.5px;overflow:hidden">
<div class="a t" style="left:3.5px;top:4.6px;font-size:8.2px;line-height:10px;color:#e4ecf2">P1279...</div>

</div>
<div class="a" style="left:703.00px;top:89.50px;width:29.80px;height:16.8px;background:#4a6b8e;border-radius:1.5px;overflow:hidden">
<div class="a t" style="left:3.5px;top:4.6px;font-size:8.2px;line-height:10px;color:#e4ecf2">P127...</div>

</div>
<div class="a" style="left:734.50px;top:89.50px;width:82.50px;height:16.8px;background:#4a6b8e;border-radius:1.5px;overflow:hidden">
<div class="a t" style="left:20px;top:4.6px;font-size:8.2px;line-height:10px;color:#e4ecf2">P1279539.MP4</div>
<svg class="a" style="left:4px;top:3px" width="11" height="11" viewBox="0 0 11 11"><path d="M2.2 8.8 A4.3 4.3 0 1 1 8.8 8.8" fill="none" stroke="#d8dee4" stroke-width="1.1"/><path d="M5.5 6 L7.5 3.5" stroke="#d8dee4" stroke-width="1.1"/></svg>
</div>
<div class="a" style="left:818.70px;top:89.50px;width:68.30px;height:16.8px;background:#4a6b8e;border-radius:1.5px;overflow:hidden">
<div class="a t" style="left:3.5px;top:4.6px;font-size:8.2px;line-height:10px;color:#e4ecf2">Comp...</div>
<svg class="a" style="left:37.3px;top:3px" width="12" height="11" viewBox="0 0 12 11"><path d="M0.8 2.5 Q2.5 1 4 3 L7.5 8 Q9 10 11.2 8.5" fill="none" stroke="#0c0c0e" stroke-width="1.7"/></svg><svg class="a" style="left:52.8px;top:3.2px" width="10" height="10" viewBox="0 0 10 10"><path d="M5 0.8 L9.2 5 L5 9.2 L0.8 5Z" fill="#0c0c0e"/><path d="M5 2.2 L3 5 L5 7.8" fill="none" stroke="#9ab" stroke-width="0.7" opacity="0.5"/></svg>
</div>
<div class="a" style="left:167.00px;top:110.50px;width:720.00px;height:16.8px;background:#3f7a55;border-radius:1.5px;overflow:hidden">
<div class="a t" style="left:3.5px;top:4.6px;font-size:8.2px;line-height:10px;color:#e4ecf2">Andrea Tonoli - Il Pianto degli dei.wav</div>
<svg class="a" style="left:702px;top:3px" width="12" height="11" viewBox="0 0 12 11"><path d="M0.8 2.5 Q2.5 1 4 3 L7.5 8 Q9 10 11.2 8.5" fill="none" stroke="#0c0c0e" stroke-width="1.7"/></svg>
</div>
<div class="a" style="left:167.00px;top:129.80px;width:102.00px;height:16.8px;background:#3f9460;border-radius:1.5px;overflow:hidden">
<div class="a t" style="left:3.5px;top:4.6px;font-size:8.2px;line-height:10px;color:#e4ecf2">01 Low Wind Whoosh.wav</div>

</div>
<div class="a" style="left:286.90px;top:129.80px;width:18.70px;height:16.8px;background:#3f7a55;border-radius:1.5px;overflow:hidden">

</div>
<div class="a" style="left:390.00px;top:129.80px;width:59.80px;height:16.8px;background:#3f9460;border-radius:1.5px;overflow:hidden">
<div class="a t" style="left:3.5px;top:4.6px;font-size:8.2px;line-height:10px;color:#e4ecf2">46 Slow Flap....</div>

</div>
<div class="a" style="left:610.60px;top:129.80px;width:18.00px;height:16.8px;background:#3f9460;border-radius:1.5px;overflow:hidden">

</div>
<div class="a" style="left:646.25px;top:129.80px;width:59.75px;height:16.8px;background:#3f9460;border-radius:1.5px;overflow:hidden">
<div class="a t" style="left:3.5px;top:4.6px;font-size:8.2px;line-height:10px;color:#e4ecf2">46 Slow Flap....</div>

</div>
<div class="a" style="left:818.50px;top:129.80px;width:68.50px;height:16.8px;background:#3f7a55;border-radius:1.5px;overflow:hidden">
<div class="a t" style="left:3.5px;top:4.6px;font-size:8.2px;line-height:10px;color:#e4ecf2">05 Light G...</div>
<svg class="a" style="left:50.5px;top:3px" width="12" height="11" viewBox="0 0 12 11"><path d="M0.8 2.5 Q2.5 1 4 3 L7.5 8 Q9 10 11.2 8.5" fill="none" stroke="#0c0c0e" stroke-width="1.7"/></svg>
</div>
<div class="a" style="left:280.30px;top:149.20px;width:70.70px;height:16.8px;background:#3f9460;border-radius:1.5px;overflow:hidden">
<div class="a t" style="left:3.5px;top:4.6px;font-size:8.2px;line-height:10px;color:#e4ecf2">46 Slow Flap.wav</div>

</div>
<div class="a" style="left:417.50px;top:149.20px;width:48.50px;height:16.8px;background:#3f9460;border-radius:1.5px;overflow:hidden">
<div class="a t" style="left:3.5px;top:4.6px;font-size:8.2px;line-height:10px;color:#e4ecf2">13 Water ...</div>

</div>
<div class="a" style="left:621.00px;top:149.20px;width:17.75px;height:16.8px;background:#3f9460;border-radius:1.5px;overflow:hidden">

</div>
<div class="a" style="left:818.50px;top:149.20px;width:68.50px;height:16.8px;background:#3f7a55;border-radius:1.5px;overflow:hidden">
<div class="a t" style="left:20px;top:4.6px;font-size:8.2px;line-height:10px;color:#e4ecf2">10 Oc...</div>
<svg class="a" style="left:4px;top:3px" width="11" height="11" viewBox="0 0 11 11"><path d="M2.2 8.8 A4.3 4.3 0 1 1 8.8 8.8" fill="none" stroke="#d8dee4" stroke-width="1.1"/><path d="M5.5 6 L7.5 3.5" stroke="#d8dee4" stroke-width="1.1"/></svg><svg class="a" style="left:50.5px;top:3px" width="12" height="11" viewBox="0 0 12 11"><path d="M0.8 2.5 Q2.5 1 4 3 L7.5 8 Q9 10 11.2 8.5" fill="none" stroke="#0c0c0e" stroke-width="1.7"/></svg>
</div>
<div class="a" style="left:325.00px;top:168.50px;width:46.70px;height:16.8px;background:#3f9460;border-radius:1.5px;overflow:hidden">
<div class="a t" style="left:3.5px;top:4.6px;font-size:8.2px;line-height:10px;color:#e4ecf2">12 Glass ....</div>

</div>
<div class="a" style="left:427.70px;top:168.50px;width:70.10px;height:16.8px;background:#3f9460;border-radius:1.5px;overflow:hidden">
<div class="a t" style="left:3.5px;top:4.6px;font-size:8.2px;line-height:10px;color:#e4ecf2">17 Latch Click.w...</div>

</div>
<div class="a" style="left:538.30px;top:168.50px;width:65.70px;height:16.8px;background:#3f7a55;border-radius:1.5px;overflow:hidden">
<div class="a t" style="left:20px;top:4.6px;font-size:8.2px;line-height:10px;color:#e4ecf2">66 Classic...</div>
<svg class="a" style="left:5px;top:3px" width="11" height="11" viewBox="0 0 11 11"><path d="M2.2 8.8 A4.3 4.3 0 1 1 8.8 8.8" fill="none" stroke="#d8dee4" stroke-width="1.1"/><path d="M5.5 6 L7.5 3.5" stroke="#d8dee4" stroke-width="1.1"/></svg>
</div>
<div class="a" style="left:828.50px;top:168.50px;width:58.50px;height:16.8px;background:#3f9460;border-radius:1.5px;overflow:hidden">
<div class="a t" style="left:3.5px;top:4.6px;font-size:8.2px;line-height:10px;color:#e4ecf2">66 Classic R...</div>

</div>
<div class="a" style="left:316.25px;top:187.80px;width:13.75px;height:16.8px;background:#3f7a55;border-radius:1.5px;overflow:hidden">

</div>
<div class="a" style="left:331.00px;top:187.80px;width:40.70px;height:16.8px;background:#3f7a55;border-radius:1.5px;overflow:hidden">
<div class="a t" style="left:3.5px;top:4.6px;font-size:8.2px;line-height:10px;color:#e4ecf2">DB...</div>
<svg class="a" style="left:22.700000000000003px;top:3px" width="12" height="11" viewBox="0 0 12 11"><path d="M0.8 2.5 Q2.5 1 4 3 L7.5 8 Q9 10 11.2 8.5" fill="none" stroke="#0c0c0e" stroke-width="1.7"/></svg>
</div>
<div class="a" style="left:499.20px;top:187.80px;width:103.30px;height:16.8px;background:#3f7a55;border-radius:1.5px;overflow:hidden">
<div class="a t" style="left:3.5px;top:4.6px;font-size:8.2px;line-height:10px;color:#e4ecf2">69 Heavy Flap.wav</div>
<svg class="a" style="left:85.3px;top:3px" width="12" height="11" viewBox="0 0 12 11"><path d="M0.8 2.5 Q2.5 1 4 3 L7.5 8 Q9 10 11.2 8.5" fill="none" stroke="#0c0c0e" stroke-width="1.7"/></svg>
</div>
<div class="a" style="left:623.00px;top:187.80px;width:101.40px;height:16.8px;background:#3f9460;border-radius:1.5px;overflow:hidden">
<div class="a t" style="left:3.5px;top:4.6px;font-size:8.2px;line-height:10px;color:#e4ecf2">01 Low Wind Whoosh.wav</div>

</div>
<div class="a" style="left:818.50px;top:187.80px;width:68.50px;height:16.8px;background:#3f7a55;border-radius:1.5px;overflow:hidden">
<div class="a t" style="left:3.5px;top:4.6px;font-size:8.2px;line-height:10px;color:#e4ecf2">03 Cheer ...</div>
<svg class="a" style="left:50.5px;top:3px" width="12" height="11" viewBox="0 0 12 11"><path d="M0.8 2.5 Q2.5 1 4 3 L7.5 8 Q9 10 11.2 8.5" fill="none" stroke="#0c0c0e" stroke-width="1.7"/></svg>
</div>
<div class="a" style="left:499.20px;top:207.10px;width:29.40px;height:16.8px;background:#3f7a55;border-radius:1.5px;overflow:hidden">
<div class="a t" style="left:3.5px;top:4.6px;font-size:8.2px;line-height:10px;color:#e4ecf2">Artlis...</div>

</div>
<div class="a" style="left:610.60px;top:207.10px;width:49.20px;height:16.8px;background:#3f9460;border-radius:1.5px;overflow:hidden">
<div class="a t" style="left:3.5px;top:4.6px;font-size:8.2px;line-height:10px;color:#e4ecf2">01 Low Wi...</div>

</div>
<div class="a" style="left:747.20px;top:207.10px;width:49.10px;height:16.8px;background:#3f9460;border-radius:1.5px;overflow:hidden">
<div class="a t" style="left:3.5px;top:4.6px;font-size:8.2px;line-height:10px;color:#e4ecf2">DB studio...</div>

</div>
<div class="a" style="left:749.30px;top:70.30px;width:21.80px;height:3.40px;background:#c8c8cc;border-radius:2px;border:0.8px solid #555"></div>
<div class="a" style="left:663.00px;top:89.10px;width:7.50px;height:4.00px;background:#d0d0d4;border-radius:2px;border:0.8px solid #555"></div>
</div>
<div class="a" style="left:1834px;top:493.5px;width:6px;height:107px;background:#202024;"></div>
<div class="a" style="left:1834.6px;top:529px;width:4.5px;height:71px;background:#4a4a4e;border-radius:2px"></div>
<div class="a" style="left:1834px;top:603.7px;width:6px;height:114px;background:#202024;"></div>
<div class="a" style="left:1834.6px;top:604px;width:4.5px;height:92px;background:#4a4a4e;border-radius:2px"></div>
<div class="a" style="left:1474.6px;top:466px;width:1.6px;height:251px;background:#e5483a;"></div>
<svg class="a" style="left:1469.5px;top:464.5px;" width="12" height="10" viewBox="0 0 12 10"><path d="M0.3 0 H11.7 V4 Q11.7 6.5 8 7.5 L6 9.5 L4 7.5 Q0.3 6.5 0.3 4Z" fill="#f04a3c"/></svg>
<svg class="a" style="left:960px;top:408px;" width="14" height="12" viewBox="0 0 14 12"><rect x="2" y="2" width="10" height="8" fill="none" stroke="#8c8c90" stroke-width="1.1"/><g fill="#8c8c90"><rect x="0.5" y="0.5" width="3" height="3"/><rect x="10.5" y="0.5" width="3" height="3"/><rect x="0.5" y="8.5" width="3" height="3"/><rect x="10.5" y="8.5" width="3" height="3"/></g></svg>
<svg class="a" style="left:981px;top:411.5px;" width="8" height="5" viewBox="0 0 8 5"><path d="M1 1 L4 4 L7 1" fill="none" stroke="#777" stroke-width="1.1"/></svg>
<svg class="a" style="left:1240px;top:409px;" width="30" height="10" viewBox="0 0 30 10"><path d="M5 1.5 L2 5 L5 8.5" fill="none" stroke="#8c8c90" stroke-width="1.1"/><circle cx="14.5" cy="5" r="3" fill="#8c8c90"/><path d="M24.5 1.5 L27.5 5 L24.5 8.5" fill="none" stroke="#8c8c90" stroke-width="1.1"/></svg>
<svg class="a" style="left:1310px;top:409px;" width="16" height="10" viewBox="0 0 16 10"><rect x="0" y="0.5" width="2" height="9" fill="#8c8c90"/><path d="M9 0.5 L2 5 L9 9.5Z M16 0.5 L9 5 L16 9.5Z" fill="#8c8c90"/></svg>
<svg class="a" style="left:1337px;top:409.5px;" width="8" height="9" viewBox="0 0 8 9"><path d="M8 0 L0 4.5 L8 9Z" fill="#8c8c90"/></svg>
<div class="a" style="left:1359.3px;top:409.3px;width:9px;height:9.3px;background:#8c8c90;"></div>
<svg class="a" style="left:1382.7px;top:409.5px;" width="8" height="9" viewBox="0 0 8 9"><path d="M0 0 L8 4.5 L0 9Z" fill="#8c8c90"/></svg>
<svg class="a" style="left:1402.4px;top:409px;" width="16" height="10" viewBox="0 0 16 10"><path d="M0 0.5 L7 5 L0 9.5Z M7 0.5 L14 5 L7 9.5Z" fill="#8c8c90"/><rect x="14" y="0.5" width="2" height="9" fill="#8c8c90"/></svg>
<svg class="a" style="left:1430.6px;top:408.5px;" width="15" height="11" viewBox="0 0 15 11"><path d="M3 3 H12 a2 2 0 0 1 2 2 V8 a2 2 0 0 1-2 2 H3 a2 2 0 0 1-2-2 V5 a2 2 0 0 1 2-2" fill="none" stroke="#8c8c90" stroke-width="1.2"/><path d="M9 0.5 L12 3 L9 5.5" fill="none" stroke="#8c8c90" stroke-width="1.2"/></svg>
<svg class="a" style="left:1761px;top:409px;" width="15" height="10" viewBox="0 0 15 10"><rect x="1" y="1.5" width="13" height="7" rx="1.5" fill="none" stroke="#8c8c90" stroke-width="1.1"/><rect x="0" y="4" width="2" height="2" fill="#8c8c90"/><rect x="13" y="4" width="2" height="2" fill="#8c8c90"/></svg>
<svg class="a" style="left:1791px;top:409px;" width="9" height="10" viewBox="0 0 9 10"><path d="M0 0.5 L7 5 L0 9.5Z" fill="#8c8c90"/><rect x="7" y="0.5" width="2" height="9" fill="#8c8c90"/></svg>
<svg class="a" style="left:1817px;top:409px;" width="9" height="10" viewBox="0 0 9 10"><rect x="0" y="0.5" width="2" height="9" fill="#8c8c90"/><path d="M9 0.5 L2 5 L9 9.5Z" fill="#8c8c90"/></svg>
<svg class="a" style="left:959px;top:439px;" width="19" height="14" viewBox="0 0 19 14"><g fill="#7c7c80"><rect x="0" y="1" width="13" height="1.3"/><rect x="0" y="4.5" width="13" height="1.3"/><rect x="0" y="8" width="9" height="1.3"/><rect x="0" y="11.5" width="8" height="1.3"/></g><path d="M10 9 L13 12.5 L18 5.5" fill="none" stroke="#aaa" stroke-width="1.6"/></svg>
<svg class="a" style="left:1114.4px;top:440px;" width="10" height="13" viewBox="0 0 10 13"><path d="M0.5 0.5 L9 7.5 L5.5 7.8 L8 12 L6.5 12.8 L4 8.5 L1 11Z" fill="#e8463a"/></svg>
<svg class="a" style="left:1136.5px;top:439px;" width="23" height="14" viewBox="0 0 23 14"><rect x="9" y="0.5" width="5" height="13" rx="1" fill="none" stroke="#7c7c80" stroke-width="1.1"/><rect x="0.5" y="3" width="8" height="8" fill="none" stroke="#7c7c80" stroke-width="1"/><rect x="14.5" y="3" width="8" height="8" fill="none" stroke="#7c7c80" stroke-width="1"/></svg>
<svg class="a" style="left:1168.3px;top:438px;" width="18" height="16" viewBox="0 0 18 16"><path d="M9 1 V15" stroke="#7c7c80" stroke-width="1.1"/><path d="M6 5 L3 8.5 L6 12 M12 5 L15 8.5 L12 12" fill="none" stroke="#7c7c80" stroke-width="1.1"/><path d="M1 4 V13 M17 4 V13" stroke="#7c7c80" stroke-width="0.8"/></svg>
<svg class="a" style="left:1197px;top:440px;" width="17" height="11" viewBox="0 0 17 11"><rect x="0.5" y="1.5" width="16" height="8" rx="1" fill="none" stroke="#9a9a9e" stroke-width="1.1"/><g fill="#9a9a9e"><circle cx="4.5" cy="5.5" r="1.2"/><circle cx="8.5" cy="5.5" r="1.2"/><circle cx="12.5" cy="5.5" r="1.2"/></g></svg>
<div class="a" style="left:1223px;top:436px;width:1px;height:20px;background:#303034;"></div>
<svg class="a" style="left:1231.7px;top:439px;" width="21" height="14" viewBox="0 0 21 14"><rect x="5" y="0.5" width="10" height="8" fill="none" stroke="#7c7c80" stroke-width="1.1"/><rect x="0.5" y="4" width="4" height="9" fill="none" stroke="#7c7c80" stroke-width="0.9"/><rect x="16" y="4" width="4" height="9" fill="none" stroke="#7c7c80" stroke-width="0.9"/><path d="M7 11 L10 13.5 L13 11" fill="none" stroke="#7c7c80"/></svg>
<svg class="a" style="left:1262.3px;top:437.5px;" width="17" height="16" viewBox="0 0 17 16"><rect x="0.5" y="2" width="10" height="8" fill="none" stroke="#7c7c80" stroke-width="1.1"/><path d="M14 1 V13 H8" fill="none" stroke="#7c7c80" stroke-width="1"/></svg>
<svg class="a" style="left:1288.6px;top:438px;" width="22" height="15" viewBox="0 0 22 15"><rect x="0.5" y="5" width="9" height="8" fill="none" stroke="#7c7c80" stroke-width="1.1"/><rect x="11" y="1" width="9" height="8" fill="none" stroke="#7c7c80" stroke-width="1.1"/><path d="M5 13 V9 M15 9 V13" stroke="#7c7c80"/></svg>
<div class="a" style="left:1317px;top:436px;width:1px;height:20px;background:#303034;"></div>
<svg class="a" style="left:1329.5px;top:437.5px;" width="16" height="16" viewBox="0 0 16 16"><path d="M6.2 6.3 L3.6 8.9 A3.6 3.6 0 0 0 8.7 14 L11.3 11.4" fill="none" stroke="#ececee" stroke-width="2"/><circle cx="7.9" cy="4.6" r="1.1" fill="#ececee"/><circle cx="13" cy="9.7" r="1.1" fill="#ececee"/></svg>
<svg class="a" style="left:1357.5px;top:438.5px;" width="14" height="14" viewBox="0 0 14 14"><rect x="5.3" y="2.3" width="8.6" height="5" rx="2.5" transform="rotate(-45 9.6 4.8)" fill="none" stroke="#ececee" stroke-width="1.8"/><rect x="0.2" y="6.3" width="8.6" height="5" rx="2.5" transform="rotate(-45 4.5 8.8)" fill="none" stroke="#ececee" stroke-width="1.8"/></svg>
<svg class="a" style="left:1387px;top:439px;" width="11" height="13" viewBox="0 0 11 13"><path d="M3 5 V3.5 a2.5 2.5 0 0 1 5 0 V5" fill="none" stroke="#8a8a8e" stroke-width="1.3"/><rect x="0.5" y="5" width="10" height="7.5" rx="1" fill="#8a8a8e"/><rect x="3" y="7" width="5" height="3" fill="#3a3a3e"/></svg>
<div class="a" style="left:1411px;top:436px;width:1px;height:20px;background:#303034;"></div>
<svg class="a" style="left:1420.9px;top:441px;" width="8" height="8" viewBox="0 0 8 8"><path d="M0 0 H8 V8 L4 6 L0 8Z" fill="#1e8af0"/></svg>
<svg class="a" style="left:1436px;top:443px;" width="8" height="5" viewBox="0 0 8 5"><path d="M1 1 L4 4 L7 1" fill="none" stroke="#777" stroke-width="1.1"/></svg>
<svg class="a" style="left:1452px;top:441px;" width="8" height="8" viewBox="0 0 8 8"><path d="M0 0 H8 V6 L4 8 L0 6Z" fill="#1e8af0"/></svg>
<svg class="a" style="left:1466.5px;top:443px;" width="8" height="5" viewBox="0 0 8 5"><path d="M1 1 L4 4 L7 1" fill="none" stroke="#777" stroke-width="1.1"/></svg>
<div class="a" style="left:1482px;top:436px;width:1px;height:20px;background:#303034;"></div>
<svg class="a" style="left:1490px;top:439px;" width="22" height="14" viewBox="0 0 22 14"><g fill="#6a6a6e"><rect x="0" y="0" width="1.2" height="8"/><rect x="3" y="0" width="1.2" height="8"/><rect x="6" y="0" width="1.2" height="8"/><rect x="9" y="0" width="1.2" height="8"/><rect x="12" y="0" width="1.2" height="8"/><rect x="0" y="8" width="14" height="1"/></g><circle cx="14.5" cy="9" r="3.3" fill="#212125" stroke="#6a6a6e" stroke-width="1.3"/><path d="M17 11.5 L20 14" stroke="#6a6a6e" stroke-width="1.5"/></svg>
<svg class="a" style="left:1520px;top:439px;" width="22" height="14" viewBox="0 0 22 14"><g fill="#6a6a6e"><rect x="0" y="0" width="1.2" height="8"/><rect x="3" y="0" width="1.2" height="8"/><rect x="6" y="0" width="1.2" height="8"/><rect x="9" y="0" width="1.2" height="8"/><rect x="12" y="0" width="1.2" height="8"/><rect x="0" y="8" width="14" height="1"/></g><circle cx="14.5" cy="9" r="3.3" fill="#212125" stroke="#6a6a6e" stroke-width="1.3"/><path d="M17 11.5 L20 14" stroke="#6a6a6e" stroke-width="1.5"/></svg>
<svg class="a" style="left:1547px;top:439px;" width="22" height="14" viewBox="0 0 22 14"><g fill="#888"><rect x="0" y="0" width="1.2" height="8"/><rect x="3" y="0" width="1.2" height="8"/><rect x="6" y="0" width="1.2" height="8"/><rect x="9" y="0" width="1.2" height="8"/><rect x="12" y="0" width="1.2" height="8"/><rect x="0" y="8" width="14" height="1"/></g><circle cx="14.5" cy="9" r="3.3" fill="#212125" stroke="#ddd" stroke-width="1.3"/><path d="M17 11.5 L20 14" stroke="#ddd" stroke-width="1.5"/></svg>
<div class="a" style="left:1581px;top:445.5px;width:5px;height:1.2px;background:#666;"></div>
<div class="a" style="left:1600px;top:445.5px;width:69px;height:1.3px;background:#141416;"></div>
<div class="a" style="left:1638.5px;top:442.5px;width:7px;height:7px;border-radius:50%;background:#a8a8ac"></div>
<svg class="a" style="left:1672px;top:442px;" width="7" height="7" viewBox="0 0 7 7"><path d="M3.5 0 V7 M0 3.5 H7" stroke="#666" stroke-width="1"/></svg>
<svg class="a" style="left:1698.8px;top:440px;" width="14" height="12" viewBox="0 0 14 12"><path d="M0.5 4 H3.5 L7.5 0.5 V11.5 L3.5 8 H0.5Z" fill="#e0e0e0"/><path d="M9.5 3.5 a3.5 3.5 0 0 1 0 5 M11.5 2 a5.5 5.5 0 0 1 0 8" fill="none" stroke="#d0d0d0" stroke-width="1.1"/></svg>
<div class="a" style="left:1719.8px;top:445.3px;width:31px;height:1.8px;background:#22aa22;"></div>
<div class="a" style="left:1751px;top:445.5px;width:25px;height:1.3px;background:#141416;"></div>
<div class="a" style="left:1747px;top:442.5px;width:7px;height:7px;border-radius:50%;background:#a8a8ac"></div>
<div class="a" style="left:1785.2px;top:438.8px;width:29px;height:13.7px;border:1px solid #38383c;border-radius:2px;background:#1f1f23"></div>
<div class="a t" style="left:1599.7px;width:400px;text-align:center;top:441.4px;font-size:8px;line-height:9.2px;color:#a0a0a4;font-weight:normal;">DIM</div>
<div class="a" style="left:1826px;top:439px;width:1.3px;height:14px;background:#3a3a3e;"></div>
<div class="a" style="left:1829px;top:439px;width:1.3px;height:14px;background:#3a3a3e;"></div>
<svg class="a" style="left:983px;top:729px;" width="14" height="13" viewBox="0 0 14 13"><rect x="1" y="2" width="12" height="10" rx="1" fill="none" stroke="#5e5e62" stroke-width="1.2"/><path d="M3 9 L6 6 L8 8 L11 5" fill="none" stroke="#5e5e62" stroke-width="1.1"/></svg>
<svg class="a" style="left:1066px;top:729px;" width="18" height="12" viewBox="0 0 18 12"><path d="M6 1 H17 V11 H6Z" fill="none" stroke="#5e5e62" stroke-width="1.2"/><g stroke="#5e5e62" stroke-width="1"><line x1="0" y1="3" x2="5" y2="3"/><line x1="1" y1="6" x2="5" y2="6"/><line x1="0" y1="9" x2="5" y2="9"/></g><path d="M11 2 V10 M14 2 V10" stroke="#5e5e62" stroke-width="0.9"/></svg>
<svg class="a" style="left:1152.5px;top:728.5px;" width="19" height="15" viewBox="0 0 19 15"><g fill="#3d8fd8"><rect x="1" y="3.3" width="7.5" height="2"/><rect x="10.5" y="3.3" width="7.5" height="2"/></g><g fill="#6a9ac8"><rect x="3" y="6.4" width="5.5" height="1.8"/><rect x="10.5" y="6.4" width="5.5" height="1.8"/></g><g fill="#36a860"><rect x="1" y="9.4" width="7.5" height="2"/><rect x="10.5" y="9.4" width="7.5" height="2"/></g><rect x="9.2" y="1" width="1" height="14" fill="#e8402e"/><circle cx="9.7" cy="1.5" r="1.3" fill="#e8402e"/></svg>
<svg class="a" style="left:1241px;top:728px;" width="14" height="14" viewBox="0 0 14 14"><path d="M2 13 L10 4" stroke="#5e5e62" stroke-width="2.2"/><circle cx="11" cy="2.5" r="1" fill="#5e5e62"/><circle cx="7" cy="1.5" r="0.8" fill="#5e5e62"/><circle cx="13" cy="6" r="0.8" fill="#5e5e62"/></svg>
<svg class="a" style="left:1326px;top:728px;" width="14" height="14" viewBox="0 0 14 14"><g fill="#5e5e62"><circle cx="7" cy="1.5" r="1.3"/><circle cx="12.5" cy="7" r="1.3"/><circle cx="7" cy="12.5" r="1.3"/><circle cx="1.5" cy="7" r="1.3"/><circle cx="3" cy="3" r="1"/><circle cx="11" cy="3" r="1"/><circle cx="11" cy="11" r="1"/><circle cx="3" cy="11" r="1"/><circle cx="7" cy="7" r="1.5"/></g></svg>
<svg class="a" style="left:1413px;top:728px;" width="12" height="14" viewBox="0 0 12 14"><path d="M4 11 V2 L11 0.5 V9" fill="none" stroke="#5e5e62" stroke-width="1.4"/><circle cx="2.8" cy="11" r="2.2" fill="#5e5e62"/><circle cx="9.8" cy="9.5" r="2.2" fill="#5e5e62"/></svg>
<svg class="a" style="left:1498px;top:728px;" width="14" height="14" viewBox="0 0 14 14"><path d="M13 1 L5 5 L2 5 L0.5 7 L4 8 L6 12 L8 10.5 L8 8 Z" fill="none" stroke="#5e5e62" stroke-width="1.2"/></svg>
<svg class="a" style="left:1774px;top:729px;" width="12" height="12" viewBox="0 0 12 12"><path d="M6 0.5 L11.5 5.5 H10 V11.5 H7.3 V8 H4.7 V11.5 H2 V5.5 H0.5Z" fill="#b0b0b4"/></svg>
<svg class="a" style="left:1809px;top:729px;" width="13" height="13" viewBox="0 0 13 13"><circle cx="6.5" cy="6.5" r="4" fill="none" stroke="#b0b0b4" stroke-width="2.4" stroke-dasharray="2.2 1.3"/><circle cx="6.5" cy="6.5" r="3.4" fill="none" stroke="#b0b0b4" stroke-width="1.5"/></svg>
</body></html>
